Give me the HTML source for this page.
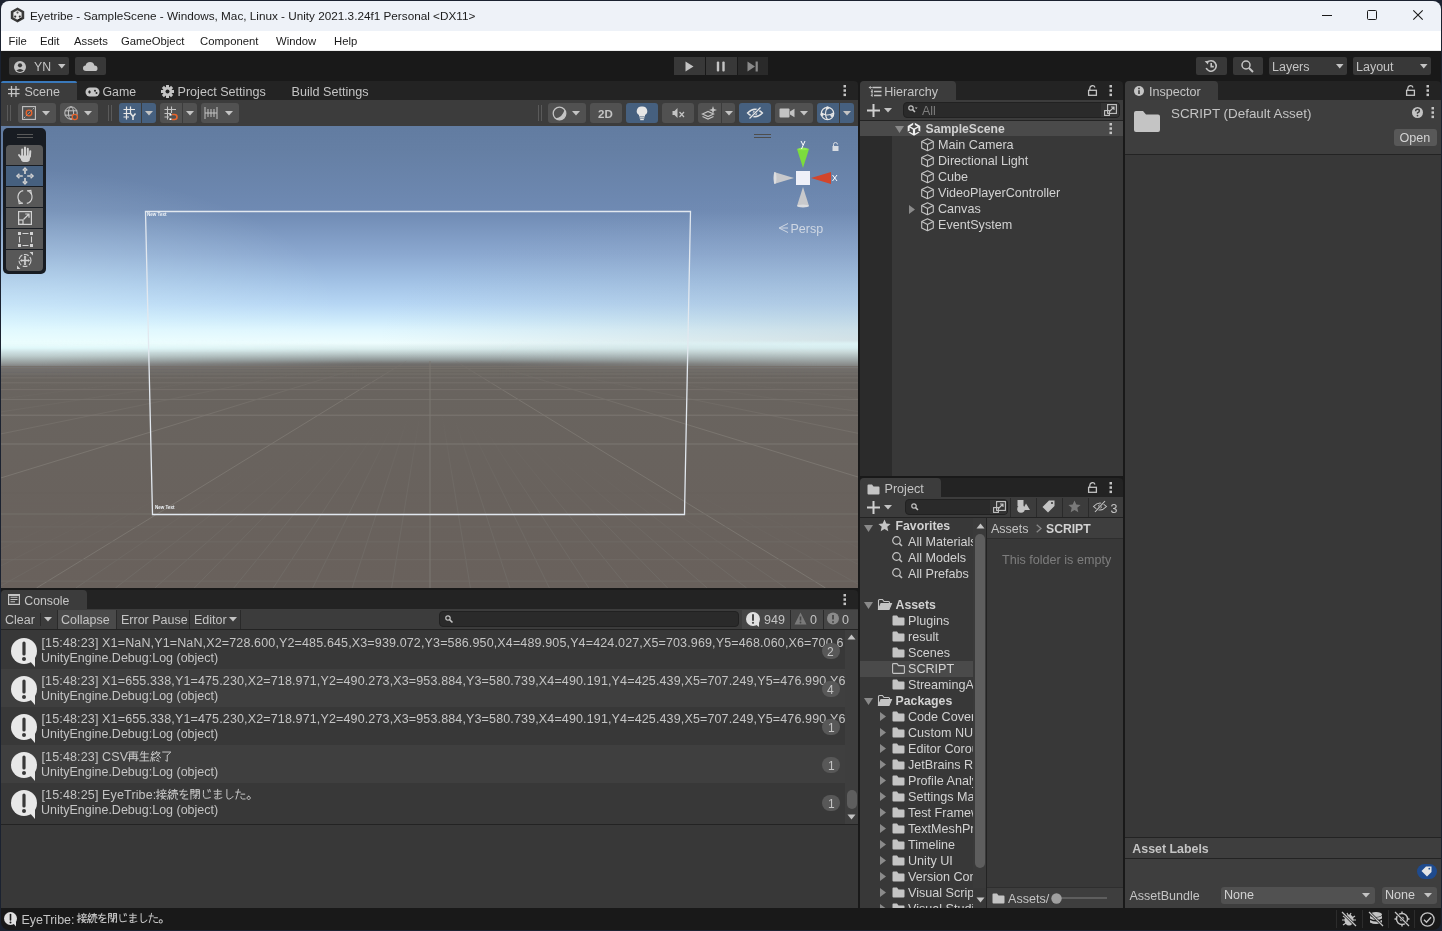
<!DOCTYPE html>
<html><head><meta charset="utf-8">
<style>
*{box-sizing:border-box;margin:0;padding:0}
html,body{width:1442px;height:931px;overflow:hidden;background:#1b2230;font-family:"Liberation Sans",sans-serif;font-size:12px;color:#c4c4c4}
.a{position:absolute}
#win{position:absolute;left:0;top:0;width:1442px;height:931px;clip-path:inset(1px 1px 1px 1px round 8px);background:#191919;overflow:hidden;will-change:transform}
.t{position:absolute;white-space:nowrap;line-height:1;text-shadow:0 0 0 transparent}
svg{position:absolute;overflow:visible}
</style></head><body>
<div id="win">

<div class="a" style="left:0px;top:0px;width:1442px;height:31px;background:#eef2f8;"></div>
<svg style="left:10px;top:7px;" width="15" height="16" viewBox="0 0 15 16"><path d="M7.5 0.5 L14.2 4.3 V11.7 L7.5 15.5 L0.8 11.7 V4.3 Z" fill="#3a3a3a"/><path d="M7.5 3.2 L11.6 5.5 V10.4 L7.5 12.8 L3.4 10.4 V5.5 Z" fill="#e8e8e8"/><circle cx="7.5" cy="5.6" r="1.1" fill="#555"/><circle cx="5.2" cy="9.6" r="1.1" fill="#333"/><circle cx="9.8" cy="9.6" r="1.1" fill="#333"/><path d="M7.5 12.8 L11.6 10.4 V11.5 L7.5 14 Z" fill="#111"/></svg>
<div class="t" style="left:30px;top:10.00px;font-size:11.74px;color:#1a1a1a;font-weight:400;letter-spacing:0px;">Eyetribe - SampleScene - Windows, Mac, Linux - Unity 2021.3.24f1 Personal &lt;DX11&gt;</div>
<div class="a" style="left:1322px;top:15px;width:10px;height:1px;background:#1a1a1a;"></div>
<div class="a" style="left:1367px;top:10px;width:10px;height:10px;border:1px solid #1a1a1a;border-radius:1.5px"></div>
<svg style="left:1413px;top:10px;" width="10" height="10" viewBox="0 0 10 10"><path d="M0.3 0.3 L9.7 9.7 M9.7 0.3 L0.3 9.7" stroke="#1a1a1a" stroke-width="1.1"/></svg>
<div class="a" style="left:0px;top:31px;width:1442px;height:19px;background:#ffffff;"></div>
<div class="a" style="left:0px;top:50px;width:1442px;height:1px;background:#ececec;"></div>
<div class="t" style="left:8.5px;top:36.00px;font-size:11.3px;color:#1a1a1a;font-weight:400;letter-spacing:0px;">File</div>
<div class="t" style="left:40px;top:36.00px;font-size:11.3px;color:#1a1a1a;font-weight:400;letter-spacing:0px;">Edit</div>
<div class="t" style="left:74px;top:36.00px;font-size:11.3px;color:#1a1a1a;font-weight:400;letter-spacing:0px;">Assets</div>
<div class="t" style="left:121px;top:36.00px;font-size:11.3px;color:#1a1a1a;font-weight:400;letter-spacing:0px;">GameObject</div>
<div class="t" style="left:200px;top:36.00px;font-size:11.3px;color:#1a1a1a;font-weight:400;letter-spacing:0px;">Component</div>
<div class="t" style="left:276px;top:36.00px;font-size:11.3px;color:#1a1a1a;font-weight:400;letter-spacing:0px;">Window</div>
<div class="t" style="left:334px;top:36.00px;font-size:11.3px;color:#1a1a1a;font-weight:400;letter-spacing:0px;">Help</div>
<div class="a" style="left:0px;top:51px;width:1442px;height:30px;background:#191919;"></div>
<div class="a" style="left:9px;top:57px;width:60px;height:18px;background:#383838;border-radius:2px"></div>
<svg style="left:14px;top:61px;" width="12" height="12" viewBox="0 0 12 12"><circle cx="6" cy="6" r="6" fill="#c4c4c4"/><circle cx="6" cy="4.3" r="2.1" fill="#383838"/><path d="M2.3 9.6 Q6 6.6 9.7 9.6 Q6 12.2 2.3 9.6Z" fill="#383838"/></svg>
<div class="t" style="left:34px;top:61.00px;font-size:12.3px;color:#c4c4c4;font-weight:400;letter-spacing:0px;">YN</div>
<svg style="left:58px;top:64px;" width="8" height="5" viewBox="0 0 8 5"><path d="M0 0 H7.5 L3.75 4.5Z" fill="#c4c4c4"/></svg>
<div class="a" style="left:75px;top:57px;width:31px;height:18px;background:#383838;border-radius:2px"></div>
<svg style="left:83px;top:61px;" width="15" height="10" viewBox="0 0 15 10"><path d="M3 10 Q0 10 0 7.3 Q0 4.8 2.6 4.6 Q3.2 1 7 1 Q10.6 1 11.4 4.4 Q14.5 4.6 14.5 7.4 Q14.5 10 11.8 10Z" fill="#c4c4c4"/></svg>
<div class="a" style="left:674px;top:57px;width:31px;height:18px;background:#383838;"></div>
<div class="a" style="left:706px;top:57px;width:31px;height:18px;background:#383838;"></div>
<div class="a" style="left:738px;top:57px;width:30px;height:18px;background:#2a2a2a;"></div>
<svg style="left:685px;top:61px;" width="9" height="11" viewBox="0 0 9 11"><path d="M0.5 0.5 L8.5 5.5 L0.5 10.5Z" fill="#c4c4c4"/></svg>
<svg style="left:716px;top:61px;" width="10" height="11" viewBox="0 0 10 11"><rect x="0.8" y="0.5" width="2.4" height="10" rx="1" fill="#c4c4c4"/><rect x="6.3" y="0.5" width="2.4" height="10" rx="1" fill="#c4c4c4"/></svg>
<svg style="left:747px;top:61px;" width="12" height="11" viewBox="0 0 12 11"><path d="M0.5 0.5 L8 5.5 L0.5 10.5Z" fill="#8a8a8a"/><rect x="8.6" y="0.5" width="2.2" height="10" fill="#8a8a8a"/></svg>
<div class="a" style="left:1196px;top:57px;width:31px;height:18px;background:#383838;border-radius:2px"></div>
<svg style="left:1204px;top:59px;" width="14" height="14" viewBox="0 0 14 14"><path d="M3.2 3.4 A5.2 5.2 0 1 1 2.2 9" stroke="#c4c4c4" stroke-width="1.6" fill="none"/><path d="M0.6 2.2 L4.4 1.8 L4 5.6Z" fill="#c4c4c4"/><path d="M7.2 4 V7.6 H9.8" stroke="#c4c4c4" stroke-width="1.6" fill="none"/></svg>
<div class="a" style="left:1233px;top:57px;width:30px;height:18px;background:#383838;border-radius:2px"></div>
<svg style="left:1241px;top:60px;" width="13" height="13" viewBox="0 0 13 13"><circle cx="5" cy="5" r="4" stroke="#c4c4c4" stroke-width="1.5" fill="none"/><path d="M8 8 L12 12" stroke="#c4c4c4" stroke-width="2"/></svg>
<div class="a" style="left:1269px;top:57px;width:78px;height:18px;background:#383838;border-radius:2px"></div>
<div class="t" style="left:1272px;top:61.00px;font-size:12.5px;color:#c4c4c4;font-weight:400;letter-spacing:0px;">Layers</div>
<svg style="left:1336px;top:64px;" width="8" height="5" viewBox="0 0 8 5"><path d="M0 0 H7.5 L3.75 4.5Z" fill="#c4c4c4"/></svg>
<div class="a" style="left:1353px;top:57px;width:78px;height:18px;background:#383838;border-radius:2px"></div>
<div class="t" style="left:1356px;top:61.00px;font-size:12.5px;color:#c4c4c4;font-weight:400;letter-spacing:0px;">Layout</div>
<svg style="left:1420px;top:64px;" width="8" height="5" viewBox="0 0 8 5"><path d="M0 0 H7.5 L3.75 4.5Z" fill="#c4c4c4"/></svg>
<div class="a" style="left:1px;top:81px;width:857px;height:19px;background:#232323;border-radius:4px 4px 0 0"></div>
<div class="a" style="left:1px;top:81px;width:76px;height:19px;background:#3c3c3c;border-radius:4px 4px 0 0"></div>
<div class="a" style="left:1px;top:81px;width:76px;height:2px;background:#3a79bb;border-radius:4px 4px 0 0"></div>
<svg style="left:8px;top:86px;" width="12" height="11" viewBox="0 0 12 11"><path d="M3.5 0 V11 M8 0 V11 M0 3.3 H11.5 M0 7.6 H11.5" stroke="#c4c4c4" stroke-width="1.3"/></svg>
<div class="t" style="left:24.5px;top:86.00px;font-size:12.5px;color:#c4c4c4;font-weight:400;letter-spacing:0px;">Scene</div>
<svg style="left:85px;top:87px;" width="15" height="10" viewBox="0 0 15 10"><rect x="0.5" y="0.5" width="14" height="9" rx="4.5" fill="#c4c4c4"/><path d="M3 5 H6 M4.5 3.5 V6.5" stroke="#232323" stroke-width="1.2"/><circle cx="10" cy="3.8" r="1" fill="#232323"/><circle cx="11.5" cy="6" r="1" fill="#232323"/></svg>
<div class="t" style="left:102.5px;top:86.00px;font-size:12.3px;color:#c4c4c4;font-weight:400;letter-spacing:0px;">Game</div>
<svg style="left:161px;top:85px;" width="13" height="13" viewBox="0 0 13 13"><g transform="translate(6.5 6.5)"><circle r="4.6" fill="#c4c4c4"/><rect x="-1.5" y="-6.5" width="3" height="3.5" fill="#c4c4c4" transform="rotate(0)"/><rect x="-1.5" y="-6.5" width="3" height="3.5" fill="#c4c4c4" transform="rotate(45)"/><rect x="-1.5" y="-6.5" width="3" height="3.5" fill="#c4c4c4" transform="rotate(90)"/><rect x="-1.5" y="-6.5" width="3" height="3.5" fill="#c4c4c4" transform="rotate(135)"/><rect x="-1.5" y="-6.5" width="3" height="3.5" fill="#c4c4c4" transform="rotate(180)"/><rect x="-1.5" y="-6.5" width="3" height="3.5" fill="#c4c4c4" transform="rotate(225)"/><rect x="-1.5" y="-6.5" width="3" height="3.5" fill="#c4c4c4" transform="rotate(270)"/><rect x="-1.5" y="-6.5" width="3" height="3.5" fill="#c4c4c4" transform="rotate(315)"/><circle r="2" fill="#232323"/></g></svg>
<div class="t" style="left:177.5px;top:86.00px;font-size:12.6px;color:#c4c4c4;font-weight:400;letter-spacing:0px;">Project Settings</div>
<div class="t" style="left:291.5px;top:86.00px;font-size:12.6px;color:#c4c4c4;font-weight:400;letter-spacing:0px;">Build Settings</div>
<svg style="left:843px;top:85px;" width="4" height="12" viewBox="0 0 4 12"><rect x="0.5" y="0" width="2.5" height="2.5" fill="#c4c4c4"/><rect x="0.5" y="4.3" width="2.5" height="2.5" fill="#c4c4c4"/><rect x="0.5" y="8.6" width="2.5" height="2.5" fill="#c4c4c4"/></svg>
<div class="a" style="left:1px;top:100px;width:857px;height:26px;background:#3c3c3c;"></div>
<div class="a" style="left:7px;top:105px;width:1px;height:16px;background:#5a5a5a;"></div>
<div class="a" style="left:10px;top:105px;width:1px;height:16px;background:#5a5a5a;"></div>
<div class="a" style="left:108px;top:105px;width:1px;height:16px;background:#5a5a5a;"></div>
<div class="a" style="left:111px;top:105px;width:1px;height:16px;background:#5a5a5a;"></div>
<div class="a" style="left:18px;top:103px;width:38px;height:20px;background:#515151;border-radius:3px"></div>
<svg style="left:22px;top:106px;" width="14" height="14" viewBox="0 0 14 14"><rect x="0.6" y="0.6" width="12.8" height="12.8" fill="none" stroke="#c4c4c4" stroke-width="1.1"/><path d="M2 12 L12 2" stroke="#c4c4c4" stroke-width="0.9" stroke-dasharray="1.5 1"/><circle cx="7" cy="7" r="2.8" fill="none" stroke="#e8642c" stroke-width="1.3"/></svg>
<svg style="left:42px;top:111px;" width="8" height="5" viewBox="0 0 8 5"><path d="M0 0 H8 L4 4.6Z" fill="#c4c4c4"/></svg>
<div class="a" style="left:60px;top:103px;width:38px;height:20px;background:#515151;border-radius:3px"></div>
<svg style="left:64px;top:106px;" width="14" height="14" viewBox="0 0 14 14"><circle cx="7" cy="7" r="6.2" fill="none" stroke="#c4c4c4" stroke-width="1"/><ellipse cx="7" cy="7" rx="2.6" ry="6.2" fill="none" stroke="#c4c4c4" stroke-width="1"/><path d="M0.8 4.8 H13.2 M0.8 9.2 H13.2" stroke="#c4c4c4" stroke-width="1"/><circle cx="10.8" cy="11" r="2.6" fill="#515151" stroke="#e8642c" stroke-width="1.3"/></svg>
<svg style="left:84px;top:111px;" width="8" height="5" viewBox="0 0 8 5"><path d="M0 0 H8 L4 4.6Z" fill="#c4c4c4"/></svg>
<div class="a" style="left:119px;top:103px;width:22px;height:20px;background:#46607f;border-radius:3px 0 0 3px"></div>
<div class="a" style="left:142px;top:103px;width:14px;height:20px;background:#46607f;border-radius:0 3px 3px 0"></div>
<svg style="left:123px;top:106px;" width="14" height="14" viewBox="0 0 14 14"><path d="M3.5 0.5 V13.5 M7.5 0.5 V8 M0.5 3.5 H12 M0.5 7.5 H7 M0.5 11 H6" stroke="#e6e6e6" stroke-width="1.2"/><path d="M7.5 7.5 L10 10.5 L12.5 7.5 M10 10.5 V14" stroke="#e6e6e6" stroke-width="1.5" fill="none"/></svg>
<svg style="left:145px;top:111px;" width="8" height="5" viewBox="0 0 8 5"><path d="M0 0 H8 L4 4.6Z" fill="#c4c4c4"/></svg>
<div class="a" style="left:160px;top:103px;width:22px;height:20px;background:#515151;border-radius:3px 0 0 3px"></div>
<div class="a" style="left:183px;top:103px;width:14px;height:20px;background:#515151;border-radius:0 3px 3px 0"></div>
<svg style="left:164px;top:106px;" width="14" height="14" viewBox="0 0 14 14"><path d="M3.5 0.5 V13.5 M7.5 0.5 V7 M0.5 3.5 H12 M0.5 7.5 H7 M0.5 11 H5" stroke="#c4c4c4" stroke-width="1.1"/><path d="M8 8.5 H10.5 A2.5 2.5 0 0 1 10.5 13.5 H8" stroke="#e8642c" stroke-width="1.6" fill="none"/><rect x="5.5" y="8" width="2" height="1.6" fill="#fff"/><rect x="5.5" y="12.4" width="2" height="1.6" fill="#fff"/></svg>
<svg style="left:186px;top:111px;" width="8" height="5" viewBox="0 0 8 5"><path d="M0 0 H8 L4 4.6Z" fill="#c4c4c4"/></svg>
<div class="a" style="left:201px;top:103px;width:38px;height:20px;background:#515151;border-radius:3px"></div>
<svg style="left:204px;top:106px;" width="14" height="14" viewBox="0 0 14 14"><path d="M1 1 V13 M13 1 V13 M1 7 H13 M4 3 V11 M7 3 V11 M10 3 V11" stroke="#c4c4c4" stroke-width="1"/></svg>
<svg style="left:225px;top:111px;" width="8" height="5" viewBox="0 0 8 5"><path d="M0 0 H8 L4 4.6Z" fill="#c4c4c4"/></svg>
<div class="a" style="left:538px;top:105px;width:1px;height:16px;background:#5a5a5a;"></div>
<div class="a" style="left:541px;top:105px;width:1px;height:16px;background:#5a5a5a;"></div>
<div class="a" style="left:548px;top:103px;width:38px;height:20px;background:#515151;border-radius:3px"></div>
<svg style="left:552px;top:106px;" width="15" height="15" viewBox="0 0 15 15"><circle cx="7.5" cy="7.5" r="6.3" fill="none" stroke="#c4c4c4" stroke-width="1.3"/><path d="M12.6 3.8 A6.3 6.3 0 0 1 3.2 12.1 Q9.8 12.6 12.6 3.8Z" fill="#c4c4c4"/></svg>
<svg style="left:572px;top:111px;" width="8" height="5" viewBox="0 0 8 5"><path d="M0 0 H8 L4 4.6Z" fill="#c4c4c4"/></svg>
<div class="a" style="left:590px;top:103px;width:32px;height:20px;background:#515151;border-radius:3px"></div>
<div class="t" style="left:598px;top:109.00px;font-size:11.5px;color:#c4c4c4;font-weight:700;letter-spacing:0px;">2D</div>
<div class="a" style="left:626px;top:103px;width:32px;height:20px;background:#46607f;border-radius:3px"></div>
<svg style="left:636px;top:106px;" width="12" height="15" viewBox="0 0 12 15"><path d="M6 0.5 A4.6 4.6 0 0 1 9 9 V10.5 H3 V9 A4.6 4.6 0 0 1 6 0.5Z" fill="#e6e6e6"/><rect x="3.6" y="11.2" width="4.8" height="1.3" fill="#e6e6e6"/><rect x="4.2" y="13" width="3.6" height="1.2" fill="#e6e6e6"/></svg>
<div class="a" style="left:662px;top:103px;width:32px;height:20px;background:#515151;border-radius:3px"></div>
<svg style="left:672px;top:107px;" width="14" height="12" viewBox="0 0 14 12"><path d="M0.5 4 H2.5 L5.5 1 V11 L2.5 8 H0.5Z" fill="#c4c4c4"/><path d="M7.5 5 L12 10 M12 5 L7.5 10" stroke="#c4c4c4" stroke-width="1.2"/></svg>
<div class="a" style="left:698px;top:103px;width:23px;height:20px;background:#515151;border-radius:3px 0 0 3px"></div>
<div class="a" style="left:722px;top:103px;width:13px;height:20px;background:#515151;border-radius:0 3px 3px 0"></div>
<svg style="left:702px;top:106px;" width="15" height="14" viewBox="0 0 15 14"><path d="M0.5 8 L6 5.5 L11.5 8 L6 10.5Z M0.5 10.5 L6 13 L11.5 10.5" fill="none" stroke="#c4c4c4" stroke-width="1.2"/><path d="M11 0 L12 3 L15 4 L12 5 L11 8 L10 5 L7 4 L10 3Z" fill="#c4c4c4"/></svg>
<svg style="left:725px;top:111px;" width="8" height="5" viewBox="0 0 8 5"><path d="M0 0 H8 L4 4.6Z" fill="#c4c4c4"/></svg>
<div class="a" style="left:739px;top:103px;width:32px;height:20px;background:#46607f;border-radius:3px"></div>
<svg style="left:747px;top:107px;" width="16" height="12" viewBox="0 0 16 12"><path d="M0.5 6 Q8 -1.5 15.5 6 Q8 13.5 0.5 6Z" fill="none" stroke="#e6e6e6" stroke-width="1.3"/><circle cx="8" cy="6" r="2.3" fill="#e6e6e6"/><path d="M2 12 L14 0" stroke="#46607f" stroke-width="2.6"/><path d="M2.5 11.5 L13.5 0.5" stroke="#e6e6e6" stroke-width="1.2"/></svg>
<div class="a" style="left:775px;top:103px;width:38px;height:20px;background:#515151;border-radius:3px"></div>
<svg style="left:779px;top:108px;" width="16" height="10" viewBox="0 0 16 10"><rect x="0.5" y="0.5" width="10" height="9" rx="1" fill="#c4c4c4"/><path d="M11 3.5 L15.5 0.8 V9.2 L11 6.5Z" fill="#c4c4c4"/></svg>
<svg style="left:800px;top:111px;" width="8" height="5" viewBox="0 0 8 5"><path d="M0 0 H8 L4 4.6Z" fill="#c4c4c4"/></svg>
<div class="a" style="left:817px;top:103px;width:22px;height:20px;background:#46607f;border-radius:3px 0 0 3px"></div>
<div class="a" style="left:840px;top:103px;width:14px;height:20px;background:#46607f;border-radius:0 3px 3px 0"></div>
<svg style="left:820px;top:106px;" width="15" height="15" viewBox="0 0 15 15"><circle cx="7.5" cy="7.5" r="6.2" fill="none" stroke="#e6e6e6" stroke-width="1.3"/><path d="M1.5 7 Q7.5 11 13.5 7 M7.5 1.3 Q3.5 7.5 7.5 13.7" fill="none" stroke="#e6e6e6" stroke-width="1.2"/><circle cx="7.5" cy="1.8" r="1.6" fill="#e6e6e6"/><circle cx="2" cy="8.5" r="1.6" fill="#e6e6e6"/><circle cx="12" cy="9.5" r="1.6" fill="#e6e6e6"/></svg>
<svg style="left:843px;top:111px;" width="8" height="5" viewBox="0 0 8 5"><path d="M0 0 H8 L4 4.6Z" fill="#c4c4c4"/></svg>
<div class="a" style="left:1px;top:126px;width:857px;height:462px;overflow:hidden;background:linear-gradient(180deg,#627ca1 0px,#657fa4 24px,#6f8ab3 85px,#8ba8d0 128px,#9fbfe3 153px,#b6d6f4 178px,#cdeafb 194px,#dff6fe 204px,#eefdfe 217px,#d9ecec 223px,#b9c8c8 228px,#8f9797 234px,#706e6c 238px,#6a6661 244px,#69645f 262px,#69615c 462px)">
<div class="a" style="left:0;top:0;width:857px;height:226px;background:radial-gradient(ellipse 340px 150px at 0px 192px,rgba(230,255,255,0.36),rgba(230,255,255,0) 100%)"></div>
<div class="a" style="left:0;top:0;width:857px;height:232px;background:radial-gradient(ellipse 480px 150px at 857px 215px,rgba(150,160,170,0.28),rgba(150,160,170,0) 100%)"></div>
<div class="a" style="left:0;top:214px;width:380px;height:38px;background:linear-gradient(180deg,rgba(240,253,254,0) 0px,#e8fbfc 5px,#e0f8fa 8px,#cde0e2 12px,#bccccc 16px,#a5b0b0 20px,#909494 24px,#757373 28px,#6d6b6b 31px,#69645f 38px);-webkit-mask-image:linear-gradient(90deg,#000 0px,#000 40px,transparent 360px);mask-image:linear-gradient(90deg,#000 0px,#000 40px,transparent 360px)"></div>
<div class="a" style="left:477px;top:214px;width:380px;height:38px;background:linear-gradient(180deg,rgba(220,242,245,0) 0px,#dcf2f5 4px,#d6ecee 8px,#c8d8d8 12px,#a8b3b3 18px,#8d908f 24px,#6e6b69 30px,#69645f 38px);-webkit-mask-image:linear-gradient(270deg,#000 0px,#000 40px,transparent 360px);mask-image:linear-gradient(270deg,#000 0px,#000 40px,transparent 360px)"></div>
<svg style="left:0;top:0" width="857" height="462"><defs><linearGradient id="fadeF" gradientUnits="userSpaceOnUse" x1="0" y1="269" x2="0" y2="344"><stop offset="0" stop-color="#6f6a65" stop-opacity="0"/><stop offset="1" stop-color="#6f6a65" stop-opacity="1"/></linearGradient><linearGradient id="fadeM" gradientUnits="userSpaceOnUse" x1="0" y1="236" x2="0" y2="294"><stop offset="0" stop-color="#7a756f" stop-opacity="0.15"/><stop offset="1" stop-color="#7a756f" stop-opacity="1"/></linearGradient></defs><linearGradient id="g1" gradientUnits="userSpaceOnUse" x1="29.1" y1="255.1" x2="-0.0" y2="257.7"><stop offset="0" stop-color="#7a756f" stop-opacity="0.00"/><stop offset="1" stop-color="#7a756f" stop-opacity="0.01"/></linearGradient><line x1="29.1" y1="255.1" x2="-0.0" y2="257.7" stroke="url(#g1)" stroke-width="1"/><linearGradient id="g2" gradientUnits="userSpaceOnUse" x1="135.0" y1="250.2" x2="0.0" y2="264.0"><stop offset="0" stop-color="#7a756f" stop-opacity="0.00"/><stop offset="1" stop-color="#7a756f" stop-opacity="0.07"/></linearGradient><line x1="135.0" y1="250.2" x2="0.0" y2="264.0" stroke="url(#g2)" stroke-width="1"/><linearGradient id="g3" gradientUnits="userSpaceOnUse" x1="224.7" y1="245.2" x2="0.0" y2="272.8"><stop offset="0" stop-color="#7a756f" stop-opacity="0.00"/><stop offset="1" stop-color="#7a756f" stop-opacity="0.16"/></linearGradient><line x1="224.7" y1="245.2" x2="0.0" y2="272.8" stroke="url(#g3)" stroke-width="1"/><linearGradient id="g4" gradientUnits="userSpaceOnUse" x1="298.1" y1="240.2" x2="-0.0" y2="285.9"><stop offset="0" stop-color="#7a756f" stop-opacity="0.00"/><stop offset="1" stop-color="#7a756f" stop-opacity="0.32"/></linearGradient><line x1="298.1" y1="240.2" x2="-0.0" y2="285.9" stroke="url(#g4)" stroke-width="1"/><linearGradient id="g5" gradientUnits="userSpaceOnUse" x1="355.1" y1="235.3" x2="0.0" y2="307.9"><stop offset="0" stop-color="#7a756f" stop-opacity="0.00"/><stop offset="1" stop-color="#7a756f" stop-opacity="0.68"/></linearGradient><line x1="355.1" y1="235.3" x2="0.0" y2="307.9" stroke="url(#g5)" stroke-width="1"/><linearGradient id="g6" gradientUnits="userSpaceOnUse" x1="381.1" y1="235.0" x2="157.2" y2="303.7"><stop offset="0" stop-color="#7a756f" stop-opacity="0.06"/><stop offset="1" stop-color="#7a756f" stop-opacity="1.00"/></linearGradient><line x1="381.1" y1="235.0" x2="-0.0" y2="351.9" stroke="url(#g6)" stroke-width="1"/><linearGradient id="g7" gradientUnits="userSpaceOnUse" x1="46.3" y1="388.1" x2="0.0" y2="408.4"><stop offset="0" stop-color="#6f6a65" stop-opacity="0.00"/><stop offset="1" stop-color="#6f6a65" stop-opacity="0.12"/></linearGradient><line x1="46.3" y1="388.1" x2="0.0" y2="408.4" stroke="url(#g7)" stroke-width="1"/><linearGradient id="g8" gradientUnits="userSpaceOnUse" x1="94.9" y1="378.1" x2="0.0" y2="422.9"><stop offset="0" stop-color="#6f6a65" stop-opacity="0.00"/><stop offset="1" stop-color="#6f6a65" stop-opacity="0.28"/></linearGradient><line x1="94.9" y1="378.1" x2="0.0" y2="422.9" stroke="url(#g8)" stroke-width="1"/><linearGradient id="g9" gradientUnits="userSpaceOnUse" x1="140.0" y1="368.2" x2="-0.0" y2="439.8"><stop offset="0" stop-color="#6f6a65" stop-opacity="0.00"/><stop offset="1" stop-color="#6f6a65" stop-opacity="0.48"/></linearGradient><line x1="140.0" y1="368.2" x2="-0.0" y2="439.8" stroke="url(#g9)" stroke-width="1"/><linearGradient id="g10" gradientUnits="userSpaceOnUse" x1="181.6" y1="358.5" x2="0.0" y2="459.8"><stop offset="0" stop-color="#6f6a65" stop-opacity="0.00"/><stop offset="1" stop-color="#6f6a65" stop-opacity="0.73"/></linearGradient><line x1="181.6" y1="358.5" x2="0.0" y2="459.8" stroke="url(#g10)" stroke-width="1"/><linearGradient id="g11" gradientUnits="userSpaceOnUse" x1="405.5" y1="235.0" x2="353.5" y2="266.9"><stop offset="0" stop-color="#7a756f" stop-opacity="0.22"/><stop offset="1" stop-color="#7a756f" stop-opacity="1.00"/></linearGradient><line x1="405.5" y1="235.0" x2="35.5" y2="462.0" stroke="url(#g11)" stroke-width="1"/><linearGradient id="g12" gradientUnits="userSpaceOnUse" x1="254.2" y1="339.8" x2="78.4" y2="459.6"><stop offset="0" stop-color="#6f6a65" stop-opacity="0.00"/><stop offset="1" stop-color="#6f6a65" stop-opacity="1.00"/></linearGradient><line x1="254.2" y1="339.8" x2="74.9" y2="462.0" stroke="url(#g12)" stroke-width="1"/><linearGradient id="g13" gradientUnits="userSpaceOnUse" x1="285.4" y1="330.9" x2="140.8" y2="441.8"><stop offset="0" stop-color="#6f6a65" stop-opacity="0.00"/><stop offset="1" stop-color="#6f6a65" stop-opacity="1.00"/></linearGradient><line x1="285.4" y1="330.9" x2="114.4" y2="462.0" stroke="url(#g13)" stroke-width="1"/><linearGradient id="g14" gradientUnits="userSpaceOnUse" x1="313.2" y1="322.4" x2="196.3" y2="424.8"><stop offset="0" stop-color="#6f6a65" stop-opacity="0.00"/><stop offset="1" stop-color="#6f6a65" stop-opacity="1.00"/></linearGradient><line x1="313.2" y1="322.4" x2="153.8" y2="462.0" stroke="url(#g14)" stroke-width="1"/><linearGradient id="g15" gradientUnits="userSpaceOnUse" x1="337.7" y1="314.4" x2="245.4" y2="408.8"><stop offset="0" stop-color="#6f6a65" stop-opacity="0.00"/><stop offset="1" stop-color="#6f6a65" stop-opacity="1.00"/></linearGradient><line x1="337.7" y1="314.4" x2="193.3" y2="462.0" stroke="url(#g15)" stroke-width="1"/><linearGradient id="g16" gradientUnits="userSpaceOnUse" x1="359.0" y1="307.1" x2="288.1" y2="394.1"><stop offset="0" stop-color="#6f6a65" stop-opacity="0.00"/><stop offset="1" stop-color="#6f6a65" stop-opacity="1.00"/></linearGradient><line x1="359.0" y1="307.1" x2="232.8" y2="462.0" stroke="url(#g16)" stroke-width="1"/><linearGradient id="g17" gradientUnits="userSpaceOnUse" x1="377.5" y1="300.6" x2="324.9" y2="381.1"><stop offset="0" stop-color="#6f6a65" stop-opacity="0.00"/><stop offset="1" stop-color="#6f6a65" stop-opacity="1.00"/></linearGradient><line x1="377.5" y1="300.6" x2="272.2" y2="462.0" stroke="url(#g17)" stroke-width="1"/><linearGradient id="g18" gradientUnits="userSpaceOnUse" x1="393.3" y1="295.1" x2="356.5" y2="370.2"><stop offset="0" stop-color="#6f6a65" stop-opacity="0.00"/><stop offset="1" stop-color="#6f6a65" stop-opacity="1.00"/></linearGradient><line x1="393.3" y1="295.1" x2="311.6" y2="462.0" stroke="url(#g18)" stroke-width="1"/><linearGradient id="g19" gradientUnits="userSpaceOnUse" x1="406.9" y1="291.0" x2="383.7" y2="361.9"><stop offset="0" stop-color="#6f6a65" stop-opacity="0.00"/><stop offset="1" stop-color="#6f6a65" stop-opacity="1.00"/></linearGradient><line x1="406.9" y1="291.0" x2="351.1" y2="462.0" stroke="url(#g19)" stroke-width="1"/><linearGradient id="g20" gradientUnits="userSpaceOnUse" x1="418.9" y1="288.4" x2="407.7" y2="356.7"><stop offset="0" stop-color="#6f6a65" stop-opacity="0.00"/><stop offset="1" stop-color="#6f6a65" stop-opacity="1.00"/></linearGradient><line x1="418.9" y1="288.4" x2="390.6" y2="462.0" stroke="url(#g20)" stroke-width="1"/><linearGradient id="g21" gradientUnits="userSpaceOnUse" x1="441.1" y1="288.4" x2="452.3" y2="356.7"><stop offset="0" stop-color="#6f6a65" stop-opacity="0.00"/><stop offset="1" stop-color="#6f6a65" stop-opacity="1.00"/></linearGradient><line x1="441.1" y1="288.4" x2="469.4" y2="462.0" stroke="url(#g21)" stroke-width="1"/><linearGradient id="g22" gradientUnits="userSpaceOnUse" x1="453.1" y1="291.0" x2="476.3" y2="361.9"><stop offset="0" stop-color="#6f6a65" stop-opacity="0.00"/><stop offset="1" stop-color="#6f6a65" stop-opacity="1.00"/></linearGradient><line x1="453.1" y1="291.0" x2="508.9" y2="462.0" stroke="url(#g22)" stroke-width="1"/><linearGradient id="g23" gradientUnits="userSpaceOnUse" x1="466.7" y1="295.1" x2="503.5" y2="370.2"><stop offset="0" stop-color="#6f6a65" stop-opacity="0.00"/><stop offset="1" stop-color="#6f6a65" stop-opacity="1.00"/></linearGradient><line x1="466.7" y1="295.1" x2="548.4" y2="462.0" stroke="url(#g23)" stroke-width="1"/><linearGradient id="g24" gradientUnits="userSpaceOnUse" x1="482.5" y1="300.6" x2="535.1" y2="381.1"><stop offset="0" stop-color="#6f6a65" stop-opacity="0.00"/><stop offset="1" stop-color="#6f6a65" stop-opacity="1.00"/></linearGradient><line x1="482.5" y1="300.6" x2="587.8" y2="462.0" stroke="url(#g24)" stroke-width="1"/><linearGradient id="g25" gradientUnits="userSpaceOnUse" x1="501.0" y1="307.1" x2="571.9" y2="394.1"><stop offset="0" stop-color="#6f6a65" stop-opacity="0.00"/><stop offset="1" stop-color="#6f6a65" stop-opacity="1.00"/></linearGradient><line x1="501.0" y1="307.1" x2="627.2" y2="462.0" stroke="url(#g25)" stroke-width="1"/><linearGradient id="g26" gradientUnits="userSpaceOnUse" x1="522.3" y1="314.4" x2="614.6" y2="408.8"><stop offset="0" stop-color="#6f6a65" stop-opacity="0.00"/><stop offset="1" stop-color="#6f6a65" stop-opacity="1.00"/></linearGradient><line x1="522.3" y1="314.4" x2="666.7" y2="462.0" stroke="url(#g26)" stroke-width="1"/><linearGradient id="g27" gradientUnits="userSpaceOnUse" x1="546.8" y1="322.4" x2="663.7" y2="424.8"><stop offset="0" stop-color="#6f6a65" stop-opacity="0.00"/><stop offset="1" stop-color="#6f6a65" stop-opacity="1.00"/></linearGradient><line x1="546.8" y1="322.4" x2="706.2" y2="462.0" stroke="url(#g27)" stroke-width="1"/><linearGradient id="g28" gradientUnits="userSpaceOnUse" x1="574.6" y1="330.9" x2="719.2" y2="441.8"><stop offset="0" stop-color="#6f6a65" stop-opacity="0.00"/><stop offset="1" stop-color="#6f6a65" stop-opacity="1.00"/></linearGradient><line x1="574.6" y1="330.9" x2="745.6" y2="462.0" stroke="url(#g28)" stroke-width="1"/><linearGradient id="g29" gradientUnits="userSpaceOnUse" x1="605.8" y1="339.8" x2="781.6" y2="459.6"><stop offset="0" stop-color="#6f6a65" stop-opacity="0.00"/><stop offset="1" stop-color="#6f6a65" stop-opacity="1.00"/></linearGradient><line x1="605.8" y1="339.8" x2="785.0" y2="462.0" stroke="url(#g29)" stroke-width="1"/><linearGradient id="g30" gradientUnits="userSpaceOnUse" x1="454.5" y1="235.0" x2="506.5" y2="266.9"><stop offset="0" stop-color="#7a756f" stop-opacity="0.22"/><stop offset="1" stop-color="#7a756f" stop-opacity="1.00"/></linearGradient><line x1="454.5" y1="235.0" x2="824.5" y2="462.0" stroke="url(#g30)" stroke-width="1"/><linearGradient id="g31" gradientUnits="userSpaceOnUse" x1="678.4" y1="358.5" x2="857.0" y2="458.1"><stop offset="0" stop-color="#6f6a65" stop-opacity="0.00"/><stop offset="1" stop-color="#6f6a65" stop-opacity="0.72"/></linearGradient><line x1="678.4" y1="358.5" x2="857.0" y2="458.1" stroke="url(#g31)" stroke-width="1"/><linearGradient id="g32" gradientUnits="userSpaceOnUse" x1="720.0" y1="368.2" x2="857.0" y2="438.3"><stop offset="0" stop-color="#6f6a65" stop-opacity="0.00"/><stop offset="1" stop-color="#6f6a65" stop-opacity="0.47"/></linearGradient><line x1="720.0" y1="368.2" x2="857.0" y2="438.3" stroke="url(#g32)" stroke-width="1"/><linearGradient id="g33" gradientUnits="userSpaceOnUse" x1="765.1" y1="378.1" x2="857.0" y2="421.5"><stop offset="0" stop-color="#6f6a65" stop-opacity="0.00"/><stop offset="1" stop-color="#6f6a65" stop-opacity="0.27"/></linearGradient><line x1="765.1" y1="378.1" x2="857.0" y2="421.5" stroke="url(#g33)" stroke-width="1"/><linearGradient id="g34" gradientUnits="userSpaceOnUse" x1="813.7" y1="388.1" x2="857.0" y2="407.1"><stop offset="0" stop-color="#6f6a65" stop-opacity="0.00"/><stop offset="1" stop-color="#6f6a65" stop-opacity="0.11"/></linearGradient><line x1="813.7" y1="388.1" x2="857.0" y2="407.1" stroke="url(#g34)" stroke-width="1"/><linearGradient id="g35" gradientUnits="userSpaceOnUse" x1="478.9" y1="235.0" x2="702.8" y2="303.7"><stop offset="0" stop-color="#7a756f" stop-opacity="0.06"/><stop offset="1" stop-color="#7a756f" stop-opacity="1.00"/></linearGradient><line x1="478.9" y1="235.0" x2="857.0" y2="351.0" stroke="url(#g35)" stroke-width="1"/><linearGradient id="g36" gradientUnits="userSpaceOnUse" x1="504.9" y1="235.3" x2="857.0" y2="307.3"><stop offset="0" stop-color="#7a756f" stop-opacity="0.00"/><stop offset="1" stop-color="#7a756f" stop-opacity="0.67"/></linearGradient><line x1="504.9" y1="235.3" x2="857.0" y2="307.3" stroke="url(#g36)" stroke-width="1"/><linearGradient id="g37" gradientUnits="userSpaceOnUse" x1="561.9" y1="240.2" x2="857.0" y2="285.5"><stop offset="0" stop-color="#7a756f" stop-opacity="0.00"/><stop offset="1" stop-color="#7a756f" stop-opacity="0.32"/></linearGradient><line x1="561.9" y1="240.2" x2="857.0" y2="285.5" stroke="url(#g37)" stroke-width="1"/><linearGradient id="g38" gradientUnits="userSpaceOnUse" x1="635.3" y1="245.2" x2="857.0" y2="272.4"><stop offset="0" stop-color="#7a756f" stop-opacity="0.00"/><stop offset="1" stop-color="#7a756f" stop-opacity="0.15"/></linearGradient><line x1="635.3" y1="245.2" x2="857.0" y2="272.4" stroke="url(#g38)" stroke-width="1"/><linearGradient id="g39" gradientUnits="userSpaceOnUse" x1="725.0" y1="250.2" x2="857.0" y2="263.7"><stop offset="0" stop-color="#7a756f" stop-opacity="0.00"/><stop offset="1" stop-color="#7a756f" stop-opacity="0.06"/></linearGradient><line x1="725.0" y1="250.2" x2="857.0" y2="263.7" stroke="url(#g39)" stroke-width="1"/><linearGradient id="g40" gradientUnits="userSpaceOnUse" x1="830.9" y1="255.1" x2="857.0" y2="257.4"><stop offset="0" stop-color="#7a756f" stop-opacity="0.00"/><stop offset="1" stop-color="#7a756f" stop-opacity="0.01"/></linearGradient><line x1="830.9" y1="255.1" x2="857.0" y2="257.4" stroke="url(#g40)" stroke-width="1"/><line x1="0" y1="240.6" x2="857" y2="240.6" stroke="#75706b" stroke-width="1"/><line x1="0" y1="242.6" x2="857" y2="242.6" stroke="#75706b" stroke-width="1"/><line x1="0" y1="245.0" x2="857" y2="245.0" stroke="#75706b" stroke-width="1"/><line x1="0" y1="248.0" x2="857" y2="248.0" stroke="#75706b" stroke-width="1"/><line x1="0" y1="251.8" x2="857" y2="251.8" stroke="#75706b" stroke-width="1"/><line x1="0" y1="256.8" x2="857" y2="256.8" stroke="#75706b" stroke-width="1"/><line x1="0" y1="263.6" x2="857" y2="263.6" stroke="#75706b" stroke-width="1"/><line x1="0" y1="273.5" x2="857" y2="273.5" stroke="#75706b" stroke-width="1"/><line x1="0" y1="289.2" x2="857" y2="289.2" stroke="#7d7873" stroke-width="1"/><line x1="0" y1="318.0" x2="857" y2="318.0" stroke="#7d7873" stroke-width="1"/><line x1="0" y1="367.0" x2="857" y2="367.0" stroke="#6f6a65" stroke-opacity="0.03" stroke-width="1"/><line x1="0" y1="376.8" x2="857" y2="376.8" stroke="#6f6a65" stroke-opacity="0.21" stroke-width="1"/><line x1="0" y1="388.0" x2="857" y2="388.0" stroke="#75706b" stroke-width="1"/><line x1="0" y1="400.9" x2="857" y2="400.9" stroke="#6f6a65" stroke-opacity="0.70" stroke-width="1"/><line x1="0" y1="415.9" x2="857" y2="415.9" stroke="#6f6a65" stroke-opacity="1.00" stroke-width="1"/><line x1="0" y1="433.7" x2="857" y2="433.7" stroke="#6f6a65" stroke-opacity="1.00" stroke-width="1"/><line x1="0" y1="455.1" x2="857" y2="455.1" stroke="#6f6a65" stroke-opacity="1.00" stroke-width="1"/><line x1="429" y1="235" x2="429" y2="462" stroke="#7d7873" stroke-width="1"/></svg>
<svg style="left:0;top:0" width="857" height="462"><path d="M144.5 85.5 L689.5 85.5 L683.5 388.5 L151.5 388.5 Z" fill="none" stroke="#e2e8ef" stroke-width="1.3"/></svg>
<div class="t" style="left:146px;top:87.00px;font-size:4.5px;color:#f0f4f8;font-weight:700;letter-spacing:0px;">New Text</div>
<div class="t" style="left:154px;top:380.00px;font-size:4.5px;color:#f0f4f8;font-weight:700;letter-spacing:0px;">New Text</div>
</div>
<div class="a" style="left:3px;top:128px;width:43px;height:146px;background:#181c22;border-radius:5px"></div>
<div class="a" style="left:17px;top:134px;width:16px;height:1px;background:#5a5a5a;"></div>
<div class="a" style="left:17px;top:137px;width:16px;height:1px;background:#5a5a5a;"></div>
<div class="a" style="left:6px;top:145px;width:37px;height:20px;background:#585858;border-radius:4px 4px 0 0"></div>
<div class="a" style="left:6px;top:166px;width:37px;height:20px;background:#46607f;"></div>
<div class="a" style="left:6px;top:187px;width:37px;height:20px;background:#585858;"></div>
<div class="a" style="left:6px;top:208px;width:37px;height:20px;background:#585858;"></div>
<div class="a" style="left:6px;top:229px;width:37px;height:20px;background:#585858;"></div>
<div class="a" style="left:6px;top:250px;width:37px;height:21px;background:#585858;border-radius:0 0 4px 4px"></div>
<svg style="left:17px;top:146px;" width="16" height="17" viewBox="0 0 16 17"><path d="M4 9.5 H13.6 L12.6 14.2 Q11.8 16 10.2 16 H6.6 Q5 16 4 14Z" fill="#d2d2d2"/><path d="M2 9 L4.6 12.5 M5.2 3.6 V10 M8 1.6 V10 M10.8 2.8 V10 M13.3 5.2 L12.9 10.5" stroke="#d2d2d2" stroke-width="2" stroke-linecap="round" fill="none"/></svg>
<svg style="left:16px;top:166px;" width="18" height="20" viewBox="0 0 18 20"><path d="M9 4 V8 M9 12 V16.2 M2.6 10 H6.8 M11.2 10 H15.4" stroke="#d2d2d2" stroke-width="1.7"/><path d="M6.8 4.6 L9 2.2 L11.2 4.6 M6.8 15.4 L9 17.8 L11.2 15.4 M3.4 7.8 L1 10 L3.4 12.2 M14.6 7.8 L17 10 L14.6 12.2" stroke="#d2d2d2" stroke-width="1.5" fill="none"/></svg>
<svg style="left:17px;top:189px;" width="16" height="16" viewBox="0 0 16 16"><path d="M6.2 1.6 A6.5 6.5 0 0 0 4.6 13.8 M9.8 14.4 A6.5 6.5 0 0 0 11.4 2.2" stroke="#d2d2d2" stroke-width="1.2" fill="none"/><path d="M1.6 10.8 L2.2 14.6 L6 14.2 M14.4 5.2 L13.8 1.4 L10 1.8" stroke="#d2d2d2" stroke-width="1.2" fill="none"/></svg>
<svg style="left:18px;top:211px;" width="14" height="14" viewBox="0 0 14 14"><rect x="0.6" y="0.6" width="12.8" height="12.8" fill="none" stroke="#d2d2d2" stroke-width="1.2"/><rect x="0.6" y="9" width="4.4" height="4.4" fill="none" stroke="#d2d2d2" stroke-width="1.2"/><path d="M5.5 8.5 L11 3 M7.2 3 H11 V6.8" fill="none" stroke="#d2d2d2" stroke-width="1.2"/></svg>
<svg style="left:18px;top:232px;" width="15" height="15" viewBox="0 0 15 15"><path d="M4.5 1.5 H10.5 M4.5 13.5 H10.5 M1.5 4.5 V10.5 M13.5 4.5 V10.5" stroke="#d2d2d2" stroke-width="1.1"/><rect x="0" y="0" width="3" height="3" fill="#d2d2d2"/><rect x="12" y="0" width="3" height="3" fill="#d2d2d2"/><rect x="0" y="12" width="3" height="3" fill="#d2d2d2"/><rect x="12" y="12" width="3" height="3" fill="#d2d2d2"/></svg>
<svg style="left:17px;top:252px;" width="16" height="17" viewBox="0 0 16 17"><circle cx="8" cy="8.5" r="6" fill="none" stroke="#d2d2d2" stroke-width="1.1" stroke-dasharray="5 1.6"/><path d="M8 4.5 V12.5 M4 8.5 H12" stroke="#d2d2d2" stroke-width="1.6"/><path d="M8 3.5 L6.5 5.2 H9.5Z M8 13.5 L6.5 11.8 H9.5Z M3 8.5 L4.7 7 V10Z M13 8.5 L11.3 7 V10Z" fill="#d2d2d2"/><path d="M0 17 V13.5 L3.5 17Z M16 0 V3.5 L12.5 0Z" fill="#d2d2d2"/></svg>
<div class="a" style="left:754px;top:134px;width:17px;height:1px;background:#4d4d4d;"></div>
<div class="a" style="left:754px;top:137px;width:17px;height:1px;background:#4d4d4d;"></div>
<svg style="left:832px;top:142px;" width="7" height="9" viewBox="0 0 7 9"><path d="M1.5 4 V2.5 A2 2 0 0 1 5.5 2.5" fill="none" stroke="#d8dce2" stroke-width="1"/><rect x="0.5" y="4" width="6" height="5" fill="#d8dce2"/></svg>
<svg style="left:774px;top:140px;" width="64" height="68" viewBox="0 0 64 68">
<path d="M23 9 L35 9 L29 28Z" fill="#7cdc3c"/><path d="M23 9 Q29 6 35 9 Q29 11.5 23 9Z" fill="#90ec50"/>
<path d="M57 32 L57 44 L37 38Z" fill="#d2452b"/>
<path d="M0 32 L0 44 L20 38Z" fill="#c8c9cc"/><ellipse cx="1" cy="38" rx="1.5" ry="6" fill="#dcdde0"/>
<path d="M23 66 L35 66 L29 47Z" fill="#c8c9cc"/><ellipse cx="29" cy="66" rx="6" ry="1.5" fill="#dcdde0"/>
<rect x="22" y="31" width="14" height="14" fill="#eef0f8"/>
<path d="M27 1 L29 5 M31 1 L27.5 9" stroke="#fff" stroke-width="1" fill="none"/>
<path d="M58.5 35 L63 41 M63 35 L58.5 41" stroke="#fff" stroke-width="1"/>
</svg>
<svg style="left:778px;top:223px;" width="11" height="10" viewBox="0 0 11 10"><path d="M10 0.5 L1 5 L10 9.5 M10 5 H2" fill="none" stroke="#cfd7e3" stroke-width="1"/></svg>
<div class="t" style="left:790.5px;top:223.00px;font-size:12.5px;color:#cfd7e3;font-weight:400;letter-spacing:0px;">Persp</div>
<div class="a" style="left:1px;top:588px;width:857px;height:2px;background:#191919;"></div>
<div class="a" style="left:1px;top:590px;width:857px;height:19px;background:#232323;border-radius:4px 4px 0 0"></div>
<div class="a" style="left:1px;top:590px;width:86px;height:19px;background:#3c3c3c;border-radius:4px 4px 0 0"></div>
<svg style="left:8px;top:594px;" width="12" height="11" viewBox="0 0 12 11"><rect x="0.6" y="0.6" width="10.8" height="9.8" fill="none" stroke="#c4c4c4" stroke-width="1.2"/><path d="M2.5 3.2 H9.5 M2.5 5.5 H9.5 M2.5 7.8 H7" stroke="#c4c4c4" stroke-width="1.1"/><rect x="0" y="0" width="12" height="2" fill="#c4c4c4"/></svg>
<div class="t" style="left:24.3px;top:595.00px;font-size:12.3px;color:#c4c4c4;font-weight:400;letter-spacing:0px;">Console</div>
<svg style="left:843px;top:594px;" width="4" height="12" viewBox="0 0 4 12"><rect x="0.5" y="0" width="2.5" height="2.5" fill="#c4c4c4"/><rect x="0.5" y="4.3" width="2.5" height="2.5" fill="#c4c4c4"/><rect x="0.5" y="8.6" width="2.5" height="2.5" fill="#c4c4c4"/></svg>
<div class="a" style="left:1px;top:609px;width:857px;height:20px;background:#3c3c3c;"></div>
<div class="a" style="left:1px;top:629px;width:857px;height:1px;background:#232323;"></div>
<div class="t" style="left:5px;top:614.00px;font-size:12.5px;color:#c4c4c4;font-weight:400;letter-spacing:0px;">Clear</div>
<div class="a" style="left:40px;top:613px;width:1px;height:13px;background:#2a2a2a;"></div>
<svg style="left:44px;top:617px;" width="8" height="5" viewBox="0 0 8 5"><path d="M0 0 H8 L4.0 4.6Z" fill="#c4c4c4"/></svg>
<div class="a" style="left:57px;top:610px;width:1px;height:19px;background:#2a2a2a;"></div>
<div class="a" style="left:58px;top:610px;width:58px;height:19px;background:#4a4a4a;"></div>
<div class="t" style="left:61px;top:614.00px;font-size:12.5px;color:#c4c4c4;font-weight:400;letter-spacing:0px;">Collapse</div>
<div class="a" style="left:116px;top:610px;width:1px;height:19px;background:#2a2a2a;"></div>
<div class="t" style="left:121px;top:614.00px;font-size:12.5px;color:#c4c4c4;font-weight:400;letter-spacing:0px;">Error Pause</div>
<div class="a" style="left:189px;top:610px;width:1px;height:19px;background:#2a2a2a;"></div>
<div class="t" style="left:194px;top:614.00px;font-size:12.5px;color:#c4c4c4;font-weight:400;letter-spacing:0px;">Editor</div>
<svg style="left:229px;top:617px;" width="8" height="5" viewBox="0 0 8 5"><path d="M0 0 H8 L4.0 4.6Z" fill="#c4c4c4"/></svg>
<div class="a" style="left:240px;top:610px;width:1px;height:19px;background:#2a2a2a;"></div>
<div class="a" style="left:439px;top:611px;width:300px;height:16px;background:#2a2a2a;border:1px solid #212121;border-radius:4px"></div>
<svg style="left:445px;top:615px;" width="8" height="8" viewBox="0 0 8 8"><circle cx="3" cy="3" r="2.2" fill="none" stroke="#c4c4c4" stroke-width="1.2"/><path d="M4.6 4.6 L7.5 7.5" stroke="#c4c4c4" stroke-width="1.5"/></svg>
<div class="a" style="left:742px;top:610px;width:48px;height:19px;background:#464646;"></div>
<div class="a" style="left:790px;top:610px;width:1px;height:19px;background:#2a2a2a;"></div>
<div class="a" style="left:791px;top:610px;width:32px;height:19px;background:#464646;"></div>
<div class="a" style="left:823px;top:610px;width:1px;height:19px;background:#2a2a2a;"></div>
<div class="a" style="left:824px;top:610px;width:34px;height:19px;background:#464646;"></div>
<svg style="left:746px;top:612px;" width="15" height="15" viewBox="0 0 15 15"><circle cx="7" cy="7" r="7" fill="#e0e0e0"/><path d="M9 12 L13 15 L13 10Z" fill="#e0e0e0"/><path d="M7 3 V8" stroke="#464646" stroke-width="2" stroke-linecap="round"/><circle cx="7" cy="10.8" r="1.1" fill="#464646"/></svg>
<div class="t" style="left:764px;top:614.00px;font-size:12.5px;color:#c4c4c4;font-weight:400;letter-spacing:0px;">949</div>
<svg style="left:794px;top:612px;" width="13" height="13" viewBox="0 0 13 13"><path d="M6.5 0.5 L12.5 12.5 H0.5Z" fill="#7a7a7a"/><path d="M6.5 4.5 V8.5" stroke="#464646" stroke-width="1.6"/><circle cx="6.5" cy="10.5" r="0.9" fill="#464646"/></svg>
<div class="t" style="left:810px;top:614.00px;font-size:12.5px;color:#c4c4c4;font-weight:400;letter-spacing:0px;">0</div>
<svg style="left:827px;top:612px;" width="12" height="14" viewBox="0 0 12 14"><circle cx="6" cy="6.5" r="6" fill="#8a8a8a"/><path d="M6 3 V7.5" stroke="#464646" stroke-width="1.8"/><circle cx="6" cy="10" r="1" fill="#464646"/></svg>
<div class="t" style="left:842px;top:614.00px;font-size:12.5px;color:#c4c4c4;font-weight:400;letter-spacing:0px;">0</div>
<div class="a" style="left:1px;top:630px;width:857px;height:278px;background:#383838;"></div>
<div class="a" style="left:1px;top:630px;width:844px;height:39px;background:#383838;"></div>
<svg style="left:11px;top:638px;" width="28" height="30" viewBox="0 0 28 30"><g transform="scale(1.0)"><circle cx="13" cy="13" r="13" fill="#e8e8e8"/><path d="M18 22 L24 29 L24 18Z" fill="#e8e8e8"/><path d="M13 5 V16" stroke="#383838" stroke-width="3.2" stroke-linecap="round"/><circle cx="13" cy="21" r="2" fill="#383838"/></g></svg>
<div class="a" style="left:41px;top:632px;width:804px;height:34px;overflow:hidden">
<div class="t" style="left:0.5px;top:5.00px;font-size:12.5px;color:#c4c4c4;font-weight:400;letter-spacing:0.14px;">[15:48:23] X1=NaN,Y1=NaN,X2=728.600,Y2=485.645,X3=939.072,Y3=586.950,X4=489.905,Y4=424.027,X5=703.969,Y5=468.060,X6=700.6</div>
<div class="t" style="left:0px;top:20.00px;font-size:12.5px;color:#c4c4c4;font-weight:400;letter-spacing:0px;">UnityEngine.Debug:Log (object)</div>
</div>
<div class="a" style="left:822px;top:643px;width:18px;height:16px;border-radius:8px;background:#585858"></div>
<div class="t" style="left:827px;top:646.00px;font-size:12px;color:#c4c4c4;font-weight:400;letter-spacing:0px;">2</div>
<div class="a" style="left:1px;top:669px;width:844px;height:38px;background:#3f3f3f;"></div>
<svg style="left:11px;top:676px;" width="28" height="30" viewBox="0 0 28 30"><g transform="scale(1.0)"><circle cx="13" cy="13" r="13" fill="#e8e8e8"/><path d="M18 22 L24 29 L24 18Z" fill="#e8e8e8"/><path d="M13 5 V16" stroke="#383838" stroke-width="3.2" stroke-linecap="round"/><circle cx="13" cy="21" r="2" fill="#383838"/></g></svg>
<div class="a" style="left:41px;top:670px;width:804px;height:34px;overflow:hidden">
<div class="t" style="left:0.5px;top:5.00px;font-size:12.5px;color:#c4c4c4;font-weight:400;letter-spacing:0.14px;">[15:48:23] X1=655.338,Y1=475.230,X2=718.971,Y2=490.273,X3=953.884,Y3=580.739,X4=490.191,Y4=425.439,X5=707.249,Y5=476.990,Y6</div>
<div class="t" style="left:0px;top:20.00px;font-size:12.5px;color:#c4c4c4;font-weight:400;letter-spacing:0px;">UnityEngine.Debug:Log (object)</div>
</div>
<div class="a" style="left:822px;top:681px;width:18px;height:16px;border-radius:8px;background:#585858"></div>
<div class="t" style="left:827px;top:684.00px;font-size:12px;color:#c4c4c4;font-weight:400;letter-spacing:0px;">4</div>
<div class="a" style="left:1px;top:707px;width:844px;height:38px;background:#383838;"></div>
<svg style="left:11px;top:714px;" width="28" height="30" viewBox="0 0 28 30"><g transform="scale(1.0)"><circle cx="13" cy="13" r="13" fill="#e8e8e8"/><path d="M18 22 L24 29 L24 18Z" fill="#e8e8e8"/><path d="M13 5 V16" stroke="#383838" stroke-width="3.2" stroke-linecap="round"/><circle cx="13" cy="21" r="2" fill="#383838"/></g></svg>
<div class="a" style="left:41px;top:708px;width:804px;height:34px;overflow:hidden">
<div class="t" style="left:0.5px;top:5.00px;font-size:12.5px;color:#c4c4c4;font-weight:400;letter-spacing:0.14px;">[15:48:23] X1=655.338,Y1=475.230,X2=718.971,Y2=490.273,X3=953.884,Y3=580.739,X4=490.191,Y4=425.439,X5=707.249,Y5=476.990,Y6</div>
<div class="t" style="left:0px;top:20.00px;font-size:12.5px;color:#c4c4c4;font-weight:400;letter-spacing:0px;">UnityEngine.Debug:Log (object)</div>
</div>
<div class="a" style="left:822px;top:719px;width:18px;height:16px;border-radius:8px;background:#585858"></div>
<div class="t" style="left:828px;top:722.00px;font-size:12px;color:#c4c4c4;font-weight:400;letter-spacing:0px;">1</div>
<div class="a" style="left:1px;top:745px;width:844px;height:38px;background:#3f3f3f;"></div>
<svg style="left:11px;top:752px;" width="28" height="30" viewBox="0 0 28 30"><g transform="scale(1.0)"><circle cx="13" cy="13" r="13" fill="#e8e8e8"/><path d="M18 22 L24 29 L24 18Z" fill="#e8e8e8"/><path d="M13 5 V16" stroke="#383838" stroke-width="3.2" stroke-linecap="round"/><circle cx="13" cy="21" r="2" fill="#383838"/></g></svg>
<div class="a" style="left:41px;top:746px;width:804px;height:34px;overflow:hidden">
<div class="t" style="left:0.5px;top:5.00px;font-size:12.5px;color:#c4c4c4;font-weight:400;letter-spacing:0.14px;">[15:48:23] CSV</div>
<div class="t" style="left:0px;top:20.00px;font-size:12.5px;color:#c4c4c4;font-weight:400;letter-spacing:0px;">UnityEngine.Debug:Log (object)</div>
</div>
<svg style="left:127.5px;top:751px" width="46" height="12"><path transform="translate(0.00 0) scale(1.029)" d="M0.5 1 H9.5 M5 1 V7.5 M1.5 3 H8.5 M1.5 3 V10 M8.5 3 V9.5 L7.5 9.2 M1.5 5.2 H8.5 M0 7.5 H10" fill="none" stroke="#c4c4c4" stroke-width="0.97" stroke-linecap="round" stroke-linejoin="round"/><path transform="translate(11.20 0) scale(1.029)" d="M3 0.3 L1.2 4 M2 2.8 H9 M5 0.5 V9.6 M2 6 H8.5 M0.5 9.6 H9.5" fill="none" stroke="#c4c4c4" stroke-width="0.97" stroke-linecap="round" stroke-linejoin="round"/><path transform="translate(22.40 0) scale(1.029)" d="M2.6 0.3 L0.9 3.5 L3.6 3.4 M3.8 1.8 L0.5 7 L4.2 6.5 M2.2 7.2 V10 M0.6 8.3 L0.2 9.8 M3.4 8 L4 9.5 M6.2 0.3 L4.6 3 M5.5 1.8 H9.5 L5 6.5 M6.3 3.2 L10 6.6 M6.5 7 L7.8 7.8 M5.8 9 L8.5 10" fill="none" stroke="#c4c4c4" stroke-width="0.97" stroke-linecap="round" stroke-linejoin="round"/><path transform="translate(33.60 0) scale(1.029)" d="M1 1 H9 L5.5 4.3 M5.5 4.3 V10 L4 9.2" fill="none" stroke="#c4c4c4" stroke-width="0.97" stroke-linecap="round" stroke-linejoin="round"/></svg>
<div class="a" style="left:822px;top:757px;width:18px;height:16px;border-radius:8px;background:#585858"></div>
<div class="t" style="left:828px;top:760.00px;font-size:12px;color:#c4c4c4;font-weight:400;letter-spacing:0px;">1</div>
<div class="a" style="left:1px;top:783px;width:844px;height:41px;background:#383838;"></div>
<svg style="left:11px;top:790px;" width="28" height="30" viewBox="0 0 28 30"><g transform="scale(1.0)"><circle cx="13" cy="13" r="13" fill="#e8e8e8"/><path d="M18 22 L24 29 L24 18Z" fill="#e8e8e8"/><path d="M13 5 V16" stroke="#383838" stroke-width="3.2" stroke-linecap="round"/><circle cx="13" cy="21" r="2" fill="#383838"/></g></svg>
<div class="a" style="left:41px;top:784px;width:804px;height:34px;overflow:hidden">
<div class="t" style="left:0.5px;top:5.00px;font-size:12.5px;color:#c4c4c4;font-weight:400;letter-spacing:0.14px;">[15:48:25] EyeTribe: </div>
<div class="t" style="left:0px;top:20.00px;font-size:12.5px;color:#c4c4c4;font-weight:400;letter-spacing:0px;">UnityEngine.Debug:Log (object)</div>
</div>
<svg style="left:155.6px;top:789px" width="103" height="12"><path transform="translate(0.00 0) scale(1.029)" d="M0.3 3 H3.6 M2 0.3 V9.8 L1 9.2 M0.3 7.2 L3.7 5.6 M7 0.2 V1.5 M4.5 1.8 H9.8 M5.6 2.6 L6.1 4 M8.6 2.6 L8 4 M4.3 4.4 H10 M4.3 7 H10 M6.6 4.8 L5.4 8 L9.2 10 M8.6 7 L5 10" fill="none" stroke="#c4c4c4" stroke-width="0.97" stroke-linecap="round" stroke-linejoin="round"/><path transform="translate(11.30 0) scale(1.029)" d="M2.6 0.3 L0.9 3.5 L3.6 3.4 M3.8 1.8 L0.5 7 L4.2 6.5 M2.2 7.2 V10 M0.6 8.3 L0.2 9.8 M3.4 8 L4 9.5 M7.2 0.3 V2.6 M4.8 1.5 H9.6 M5.2 2.8 H9.2 M4.6 4.2 H10 M4.6 4.2 V5.4 M10 4.2 V5.4 M6.3 5.5 Q6.3 9 4.6 10 M8.2 5.5 V9.3 Q8.2 9.9 9 9.9 H10" fill="none" stroke="#c4c4c4" stroke-width="0.97" stroke-linecap="round" stroke-linejoin="round"/><path transform="translate(22.60 0) scale(1.029)" d="M1 2.2 H8 M4.6 0.3 Q3.5 4 1.5 6.2 Q4.5 3.8 6 5.2 Q6.3 6.5 5.2 8 M8.8 5.2 Q3 7 3.5 9 Q4 10 9 9.8" fill="none" stroke="#c4c4c4" stroke-width="0.97" stroke-linecap="round" stroke-linejoin="round"/><path transform="translate(33.90 0) scale(1.029)" d="M1 0.6 V10 M1 0.6 H4 V4 H1 M1 2.3 H4 M6 0.6 H9.2 V9.5 L8.2 9.2 M6 0.6 V4 H9.2 M6 2.3 H9.2 M3 6 H7.5 M6 5 V9.3 L5.2 9 M6 6.2 L3.5 9" fill="none" stroke="#c4c4c4" stroke-width="0.97" stroke-linecap="round" stroke-linejoin="round"/><path transform="translate(45.20 0) scale(1.029)" d="M2.2 1.5 Q1.8 6 2.6 8 Q3.6 10 8.8 8.3 M6.5 0.8 L7 3 M8.2 0.4 L8.8 2.6" fill="none" stroke="#c4c4c4" stroke-width="0.97" stroke-linecap="round" stroke-linejoin="round"/><path transform="translate(56.50 0) scale(1.029)" d="M1.5 2.2 H8.6 M1.8 4.8 H8.4 M5 0.3 V8.6 Q4 7 2.5 7.6 Q1.6 8.6 2.8 9.6 Q5.5 10.2 9.2 8.4" fill="none" stroke="#c4c4c4" stroke-width="0.97" stroke-linecap="round" stroke-linejoin="round"/><path transform="translate(67.80 0) scale(1.029)" d="M3 0.5 V7.6 Q3.2 10 5.2 9.8 Q7.6 9.4 9 7.2" fill="none" stroke="#c4c4c4" stroke-width="0.97" stroke-linecap="round" stroke-linejoin="round"/><path transform="translate(79.10 0) scale(1.029)" d="M0.6 3 H5.2 M3.2 0.3 Q2.6 5 0.9 9.8 M5.8 5 H9.4 M5.6 7.4 Q5.4 9.6 7.2 9.7 H9.8" fill="none" stroke="#c4c4c4" stroke-width="0.97" stroke-linecap="round" stroke-linejoin="round"/><path transform="translate(90.40 0) scale(1.029)" d="M2.2 7 A1.6 1.6 0 1 1 2.19 7" fill="none" stroke="#c4c4c4" stroke-width="0.97" stroke-linecap="round" stroke-linejoin="round"/></svg>
<div class="a" style="left:822px;top:795px;width:18px;height:16px;border-radius:8px;background:#585858"></div>
<div class="t" style="left:828px;top:798.00px;font-size:12px;color:#c4c4c4;font-weight:400;letter-spacing:0px;">1</div>
<div class="a" style="left:845px;top:630px;width:13px;height:194px;background:#3e3e3e;"></div>
<svg style="left:847px;top:634px;" width="9" height="6" viewBox="0 0 9 6"><path d="M0.5 5.5 L4.5 0.5 L8.5 5.5Z" fill="#c4c4c4"/></svg>
<div class="a" style="left:847px;top:790px;width:10px;height:19px;background:#5e5e5e;border-radius:5px"></div>
<svg style="left:847px;top:814px;" width="9" height="6" viewBox="0 0 9 6"><path d="M0.5 0.5 H8.5 L4.5 5.5Z" fill="#c4c4c4"/></svg>
<div class="a" style="left:1px;top:824px;width:857px;height:1px;background:#232323;"></div>
<div class="a" style="left:858px;top:81px;width:2px;height:827px;background:#191919;"></div>
<div class="a" style="left:860px;top:81px;width:263px;height:19px;background:#232323;border-radius:4px 4px 0 0"></div>
<div class="a" style="left:860px;top:81px;width:96px;height:19px;background:#3c3c3c;border-radius:4px 4px 0 0"></div>
<svg style="left:868px;top:86px;" width="14" height="11" viewBox="0 0 14 11"><path d="M4.5 1.5 H13.5 M6 5.5 H13.5 M6 9.5 H13.5" stroke="#c4c4c4" stroke-width="1.3"/><path d="M0.5 1.5 L2.8 0 V3Z M2.5 5.5 L4.6 4 V7Z M2.5 9.5 L4.6 8 V11Z" fill="#c4c4c4"/><path d="M2.5 1.5 H4.5 M4 3 V9.5" stroke="#c4c4c4" stroke-width="0.8"/></svg>
<div class="t" style="left:884.2px;top:86.00px;font-size:12.6px;color:#c4c4c4;font-weight:400;letter-spacing:0px;">Hierarchy</div>
<svg style="left:1088px;top:85px;" width="9" height="11" viewBox="0 0 9 11"><path d="M1.8 5 V3.2 A2.7 2.7 0 0 1 7 2.4" fill="none" stroke="#c4c4c4" stroke-width="1.3"/><rect x="0.6" y="5.3" width="7.8" height="5" fill="none" stroke="#c4c4c4" stroke-width="1.3"/></svg>
<svg style="left:1109px;top:85px;" width="4" height="12" viewBox="0 0 4 12"><rect x="0.5" y="0" width="2.5" height="2.5" fill="#c4c4c4"/><rect x="0.5" y="4.3" width="2.5" height="2.5" fill="#c4c4c4"/><rect x="0.5" y="8.6" width="2.5" height="2.5" fill="#c4c4c4"/></svg>
<div class="a" style="left:860px;top:100px;width:263px;height:20px;background:#3c3c3c;"></div>
<svg style="left:867px;top:104px;" width="13" height="13" viewBox="0 0 13 13"><path d="M6.5 0 V13 M0 6.5 H13" stroke="#d0d0d0" stroke-width="2"/></svg>
<svg style="left:884px;top:108px;" width="8" height="5" viewBox="0 0 8 5"><path d="M0 0 H8 L4.0 4.6Z" fill="#c4c4c4"/></svg>
<div class="a" style="left:903px;top:102px;width:217px;height:16px;background:#2a2a2a;border:1px solid #212121;border-radius:4px"></div>
<div class="a" style="left:1101px;top:103px;width:18px;height:14px;background:#333333;border-radius:0 3px 3px 0"></div>
<svg style="left:908px;top:105px;" width="10" height="9" viewBox="0 0 10 9"><circle cx="3" cy="3" r="2.2" fill="none" stroke="#c4c4c4" stroke-width="1.2"/><path d="M4.6 4.6 L7 7" stroke="#c4c4c4" stroke-width="1.5"/><path d="M6.8 2.5 H9.6 L8.2 4Z" fill="#c4c4c4"/></svg>
<div class="t" style="left:922px;top:105.00px;font-size:12.5px;color:#7d7d7d;font-weight:400;letter-spacing:0px;">All</div>
<svg style="left:1104px;top:104px;" width="13" height="12" viewBox="0 0 13 12"><rect x="0.6" y="6.6" width="4.8" height="4.8" fill="none" stroke="#c4c4c4" stroke-width="1.1"/><rect x="3.6" y="0.6" width="8.8" height="8.8" fill="none" stroke="#c4c4c4" stroke-width="1.1"/><path d="M5.5 7.5 L10 3 M7 3 H10 V6" fill="none" stroke="#c4c4c4" stroke-width="1.1"/></svg>
<div class="a" style="left:860px;top:120px;width:263px;height:1px;background:#232323;"></div>
<div class="a" style="left:860px;top:121px;width:263px;height:355px;background:#383838;"></div>
<div class="a" style="left:860px;top:121px;width:263px;height:15px;background:#4a4a4a;"></div>
<div class="a" style="left:860px;top:136px;width:32px;height:340px;background:#2b2b2b;"></div>
<svg style="left:895px;top:126px;" width="9" height="7" viewBox="0 0 9 7"><path d="M0 0 H9 L4.5 7Z" fill="#8a8a8a"/></svg>
<svg style="left:907px;top:122px;" width="14" height="14" viewBox="0 0 14 14"><path d="M7 0.3 L13.3 3.9 V10.1 L7 13.7 L0.7 10.1 V3.9Z" fill="#f0f0f0"/><path d="M7 0 V3.2" stroke="#4a4a4a" stroke-width="1.6"/><path d="M3.3 4.6 L7 2.6 L10.7 4.6 L7 6.6Z" fill="#4a4a4a"/><path d="M2.6 5.6 L5.9 7.5 V11.6 L2.6 9.7Z M11.4 5.6 L8.1 7.5 V11.6 L11.4 9.7Z" fill="#4a4a4a"/><path d="M0.4 10.4 L2.8 9.2 M13.6 10.4 L11.2 9.2" stroke="#4a4a4a" stroke-width="1.2"/></svg>
<div class="t" style="left:925.5px;top:123.00px;font-size:12.2px;color:#d2d2d2;font-weight:700;letter-spacing:0px;">SampleScene</div>
<svg style="left:1109px;top:123px;" width="4" height="12" viewBox="0 0 4 12"><rect x="0.5" y="0" width="2.5" height="2.5" fill="#c4c4c4"/><rect x="0.5" y="4.3" width="2.5" height="2.5" fill="#c4c4c4"/><rect x="0.5" y="8.6" width="2.5" height="2.5" fill="#c4c4c4"/></svg>
<svg style="left:921px;top:138px;" width="14" height="14" viewBox="0 0 14 14"><path d="M6.5 0.7 L12.3 3.6 V9.9 L6.5 12.8 L0.7 9.9 V3.6Z M0.7 3.6 L6.5 6.5 L12.3 3.6 M6.5 6.5 V12.8" fill="none" stroke="#c4c4c4" stroke-width="1.1" stroke-linejoin="round"/></svg>
<div class="t" style="left:938px;top:139.00px;font-size:12.6px;color:#d2d2d2;font-weight:400;letter-spacing:0px;">Main Camera</div>
<svg style="left:921px;top:154px;" width="14" height="14" viewBox="0 0 14 14"><path d="M6.5 0.7 L12.3 3.6 V9.9 L6.5 12.8 L0.7 9.9 V3.6Z M0.7 3.6 L6.5 6.5 L12.3 3.6 M6.5 6.5 V12.8" fill="none" stroke="#c4c4c4" stroke-width="1.1" stroke-linejoin="round"/></svg>
<div class="t" style="left:938px;top:155.00px;font-size:12.6px;color:#d2d2d2;font-weight:400;letter-spacing:0px;">Directional Light</div>
<svg style="left:921px;top:170px;" width="14" height="14" viewBox="0 0 14 14"><path d="M6.5 0.7 L12.3 3.6 V9.9 L6.5 12.8 L0.7 9.9 V3.6Z M0.7 3.6 L6.5 6.5 L12.3 3.6 M6.5 6.5 V12.8" fill="none" stroke="#c4c4c4" stroke-width="1.1" stroke-linejoin="round"/></svg>
<div class="t" style="left:938px;top:171.00px;font-size:12.6px;color:#d2d2d2;font-weight:400;letter-spacing:0px;">Cube</div>
<svg style="left:921px;top:186px;" width="14" height="14" viewBox="0 0 14 14"><path d="M6.5 0.7 L12.3 3.6 V9.9 L6.5 12.8 L0.7 9.9 V3.6Z M0.7 3.6 L6.5 6.5 L12.3 3.6 M6.5 6.5 V12.8" fill="none" stroke="#c4c4c4" stroke-width="1.1" stroke-linejoin="round"/></svg>
<div class="t" style="left:938px;top:187.00px;font-size:12.6px;color:#d2d2d2;font-weight:400;letter-spacing:0px;">VideoPlayerController</div>
<svg style="left:921px;top:202px;" width="14" height="14" viewBox="0 0 14 14"><path d="M6.5 0.7 L12.3 3.6 V9.9 L6.5 12.8 L0.7 9.9 V3.6Z M0.7 3.6 L6.5 6.5 L12.3 3.6 M6.5 6.5 V12.8" fill="none" stroke="#c4c4c4" stroke-width="1.1" stroke-linejoin="round"/></svg>
<div class="t" style="left:938px;top:203.00px;font-size:12.6px;color:#d2d2d2;font-weight:400;letter-spacing:0px;">Canvas</div>
<svg style="left:921px;top:218px;" width="14" height="14" viewBox="0 0 14 14"><path d="M6.5 0.7 L12.3 3.6 V9.9 L6.5 12.8 L0.7 9.9 V3.6Z M0.7 3.6 L6.5 6.5 L12.3 3.6 M6.5 6.5 V12.8" fill="none" stroke="#c4c4c4" stroke-width="1.1" stroke-linejoin="round"/></svg>
<div class="t" style="left:938px;top:219.00px;font-size:12.6px;color:#d2d2d2;font-weight:400;letter-spacing:0px;">EventSystem</div>
<svg style="left:909px;top:205px;" width="6" height="9" viewBox="0 0 6 9"><path d="M0 0 L6 4.5 L0 9Z" fill="#8a8a8a"/></svg>
<div class="a" style="left:860px;top:476px;width:263px;height:2px;background:#191919;"></div>
<div class="a" style="left:860px;top:478px;width:263px;height:19px;background:#232323;border-radius:4px 4px 0 0"></div>
<div class="a" style="left:860px;top:478px;width:81px;height:19px;background:#3c3c3c;border-radius:4px 4px 0 0"></div>
<svg style="left:867px;top:484px;" width="13" height="11" viewBox="0 0 13 11"><path d="M0.5 1.5 Q0.5 0.5 1.5 0.5 H5 L6.5 2.5 H11.5 Q12.5 2.5 12.5 3.5 V9.5 Q12.5 10.5 11.5 10.5 H1.5 Q0.5 10.5 0.5 9.5Z" fill="#c4c4c4"/></svg>
<div class="t" style="left:884.5px;top:483.00px;font-size:12.6px;color:#c4c4c4;font-weight:400;letter-spacing:0px;">Project</div>
<svg style="left:1088px;top:482px;" width="9" height="11" viewBox="0 0 9 11"><path d="M1.8 5 V3.2 A2.7 2.7 0 0 1 7 2.4" fill="none" stroke="#c4c4c4" stroke-width="1.3"/><rect x="0.6" y="5.3" width="7.8" height="5" fill="none" stroke="#c4c4c4" stroke-width="1.3"/></svg>
<svg style="left:1109px;top:482px;" width="4" height="12" viewBox="0 0 4 12"><rect x="0.5" y="0" width="2.5" height="2.5" fill="#c4c4c4"/><rect x="0.5" y="4.3" width="2.5" height="2.5" fill="#c4c4c4"/><rect x="0.5" y="8.6" width="2.5" height="2.5" fill="#c4c4c4"/></svg>
<div class="a" style="left:860px;top:497px;width:263px;height:20px;background:#3c3c3c;"></div>
<svg style="left:867px;top:501px;" width="13" height="13" viewBox="0 0 13 13"><path d="M6.5 0 V13 M0 6.5 H13" stroke="#d0d0d0" stroke-width="2"/></svg>
<svg style="left:884px;top:505px;" width="8" height="5" viewBox="0 0 8 5"><path d="M0 0 H8 L4.0 4.6Z" fill="#c4c4c4"/></svg>
<div class="a" style="left:905px;top:499px;width:103px;height:16px;background:#2a2a2a;border:1px solid #212121;border-radius:4px"></div>
<div class="a" style="left:990px;top:500px;width:17px;height:14px;background:#333333;border-radius:0 3px 3px 0"></div>
<svg style="left:911px;top:503px;" width="8" height="8" viewBox="0 0 8 8"><circle cx="3" cy="3" r="2.2" fill="none" stroke="#c4c4c4" stroke-width="1.2"/><path d="M4.6 4.6 L7 7" stroke="#c4c4c4" stroke-width="1.5"/></svg>
<svg style="left:993px;top:501px;" width="13" height="12" viewBox="0 0 13 12"><rect x="0.6" y="6.6" width="4.8" height="4.8" fill="none" stroke="#c4c4c4" stroke-width="1.1"/><rect x="3.6" y="0.6" width="8.8" height="8.8" fill="none" stroke="#c4c4c4" stroke-width="1.1"/><path d="M5.5 7.5 L10 3 M7 3 H10 V6" fill="none" stroke="#c4c4c4" stroke-width="1.1"/></svg>
<div class="a" style="left:1010px;top:498px;width:1px;height:19px;background:#2a2a2a;"></div>
<div class="a" style="left:1036px;top:498px;width:1px;height:19px;background:#2a2a2a;"></div>
<div class="a" style="left:1062px;top:498px;width:1px;height:19px;background:#2a2a2a;"></div>
<div class="a" style="left:1088px;top:498px;width:1px;height:19px;background:#2a2a2a;"></div>
<svg style="left:1017px;top:500px;" width="13" height="13" viewBox="0 0 13 13"><rect x="0.5" y="0" width="6" height="6" fill="#c4c4c4"/><circle cx="4" cy="9" r="3.8" fill="#c4c4c4"/><path d="M9 3.5 L13 10 H5.5Z" fill="#c4c4c4"/></svg>
<svg style="left:1042px;top:500px;" width="13" height="13" viewBox="0 0 13 13"><path d="M7 0.5 H12.5 V6 L6 12.5 L0.5 7Z" fill="#c4c4c4"/><circle cx="10" cy="3" r="1.1" fill="#3c3c3c"/></svg>
<svg style="left:1068px;top:500px;" width="13" height="13" viewBox="0 0 13 13"><path d="M6.5 0.5 L8.3 4.5 L12.6 4.9 L9.3 7.8 L10.3 12.2 L6.5 9.9 L2.7 12.2 L3.7 7.8 L0.4 4.9 L4.7 4.5Z" fill="#7a7a7a"/></svg>
<svg style="left:1093px;top:501px;" width="14" height="11" viewBox="0 0 14 11"><path d="M0.5 5.5 Q7 -1.5 13.5 5.5 Q7 12.5 0.5 5.5Z" fill="none" stroke="#c4c4c4" stroke-width="1.1"/><circle cx="7" cy="5.5" r="2" fill="#c4c4c4"/><path d="M2 11 L12 0" stroke="#3c3c3c" stroke-width="2.4"/><path d="M2 11 L12 0" stroke="#c4c4c4" stroke-width="1.1"/></svg>
<div class="t" style="left:1110.5px;top:503.00px;font-size:12.5px;color:#c4c4c4;font-weight:400;letter-spacing:0px;">3</div>
<div class="a" style="left:860px;top:517px;width:263px;height:1px;background:#232323;"></div>
<div class="a" style="left:860px;top:518px;width:263px;height:390px;background:#383838;"></div>
<div class="a" style="left:973px;top:518px;width:13px;height:370px;background:#3a3a3a;"></div>
<div class="a" style="left:986px;top:518px;width:1px;height:390px;background:#232323;"></div>
<svg style="left:976px;top:523px;" width="9" height="6" viewBox="0 0 9 6"><path d="M0.5 5.5 L4.5 0.5 L8.5 5.5Z" fill="#c4c4c4"/></svg>
<div class="a" style="left:975px;top:534px;width:10px;height:334px;background:#5e5e5e;border-radius:5px"></div>
<svg style="left:976px;top:897px;" width="9" height="6" viewBox="0 0 9 6"><path d="M0.5 0.5 H8.5 L4.5 5.5Z" fill="#c4c4c4"/></svg>
<div class="a" style="left:860px;top:661px;width:113px;height:16px;background:#4a4a4a;"></div>
<div class="a" style="left:860px;top:518px;width:113px;height:390px;overflow:hidden">
<svg style="left:4px;top:7px;" width="9" height="7" viewBox="0 0 9 7"><path d="M0 0 H9 L4.5 7Z" fill="#8a8a8a"/></svg>
<svg style="left:18px;top:1px;" width="13" height="13" viewBox="0 0 13 13"><path d="M6.5 0.5 L8.3 4.5 L12.6 4.9 L9.3 7.8 L10.3 12.2 L6.5 9.9 L2.7 12.2 L3.7 7.8 L0.4 4.9 L4.7 4.5Z" fill="#c4c4c4"/></svg>
<div class="t" style="left:35.5px;top:2.00px;font-size:12.3px;color:#d2d2d2;font-weight:700;letter-spacing:0px;">Favorites</div>
<svg style="left:32px;top:18px;" width="11" height="11" viewBox="0 0 11 11"><circle cx="4.5" cy="4.5" r="3.8" fill="none" stroke="#c4c4c4" stroke-width="1.2"/><path d="M7.2 7.2 L10 10" stroke="#c4c4c4" stroke-width="1.6"/></svg>
<div class="t" style="left:48px;top:18.00px;font-size:12.6px;color:#d2d2d2;font-weight:400;letter-spacing:0px;">All Materials</div>
<svg style="left:32px;top:34px;" width="11" height="11" viewBox="0 0 11 11"><circle cx="4.5" cy="4.5" r="3.8" fill="none" stroke="#c4c4c4" stroke-width="1.2"/><path d="M7.2 7.2 L10 10" stroke="#c4c4c4" stroke-width="1.6"/></svg>
<div class="t" style="left:48px;top:34.00px;font-size:12.6px;color:#d2d2d2;font-weight:400;letter-spacing:0px;">All Models</div>
<svg style="left:32px;top:50px;" width="11" height="11" viewBox="0 0 11 11"><circle cx="4.5" cy="4.5" r="3.8" fill="none" stroke="#c4c4c4" stroke-width="1.2"/><path d="M7.2 7.2 L10 10" stroke="#c4c4c4" stroke-width="1.6"/></svg>
<div class="t" style="left:48px;top:50.00px;font-size:12.6px;color:#d2d2d2;font-weight:400;letter-spacing:0px;">All Prefabs</div>
<svg style="left:4px;top:84px;" width="9" height="7" viewBox="0 0 9 7"><path d="M0 0 H9 L4.5 7Z" fill="#8a8a8a"/></svg>
<svg style="left:18px;top:81px;" width="14" height="11" viewBox="0 0 14 11"><path d="M0.5 10.5 V1.5 Q0.5 0.5 1.5 0.5 H4.5 L6 2.5 H10.5 Q11.5 2.5 11.5 3.5 V4.5 H3 L0.5 10.5 H11 L13.5 4.5 H3" fill="none" stroke="#c4c4c4" stroke-width="1.1"/><path d="M3 4.5 H13.5 L11 10.5 H0.5Z" fill="#c4c4c4"/></svg>
<div class="t" style="left:35.5px;top:81.00px;font-size:12.3px;color:#d2d2d2;font-weight:700;letter-spacing:0px;">Assets</div>
<svg style="left:32px;top:97px;" width="13" height="11" viewBox="0 0 13 11"><path d="M0.5 1.5 Q0.5 0.5 1.5 0.5 H5 L6.5 2.5 H11.5 Q12.5 2.5 12.5 3.5 V9.5 Q12.5 10.5 11.5 10.5 H1.5 Q0.5 10.5 0.5 9.5Z" fill="#c4c4c4"/></svg>
<div class="t" style="left:48px;top:97.00px;font-size:12.6px;color:#d2d2d2;font-weight:400;letter-spacing:0px;">Plugins</div>
<svg style="left:32px;top:113px;" width="13" height="11" viewBox="0 0 13 11"><path d="M0.5 1.5 Q0.5 0.5 1.5 0.5 H5 L6.5 2.5 H11.5 Q12.5 2.5 12.5 3.5 V9.5 Q12.5 10.5 11.5 10.5 H1.5 Q0.5 10.5 0.5 9.5Z" fill="#c4c4c4"/></svg>
<div class="t" style="left:48px;top:113.00px;font-size:12.6px;color:#d2d2d2;font-weight:400;letter-spacing:0px;">result</div>
<svg style="left:32px;top:129px;" width="13" height="11" viewBox="0 0 13 11"><path d="M0.5 1.5 Q0.5 0.5 1.5 0.5 H5 L6.5 2.5 H11.5 Q12.5 2.5 12.5 3.5 V9.5 Q12.5 10.5 11.5 10.5 H1.5 Q0.5 10.5 0.5 9.5Z" fill="#c4c4c4"/></svg>
<div class="t" style="left:48px;top:129.00px;font-size:12.6px;color:#d2d2d2;font-weight:400;letter-spacing:0px;">Scenes</div>
<svg style="left:32px;top:145px;" width="13" height="11" viewBox="0 0 13 11"><path d="M0.6 1.5 Q0.6 0.6 1.5 0.6 H5 L6.5 2.6 H11.5 Q12.4 2.6 12.4 3.5 V9.5 Q12.4 10.4 11.5 10.4 H1.5 Q0.6 10.4 0.6 9.5Z" fill="none" stroke="#c4c4c4" stroke-width="1.1"/></svg>
<div class="t" style="left:48px;top:145.00px;font-size:12.6px;color:#d2d2d2;font-weight:400;letter-spacing:0px;">SCRIPT</div>
<svg style="left:32px;top:161px;" width="13" height="11" viewBox="0 0 13 11"><path d="M0.5 1.5 Q0.5 0.5 1.5 0.5 H5 L6.5 2.5 H11.5 Q12.5 2.5 12.5 3.5 V9.5 Q12.5 10.5 11.5 10.5 H1.5 Q0.5 10.5 0.5 9.5Z" fill="#c4c4c4"/></svg>
<div class="t" style="left:48px;top:161.00px;font-size:12.6px;color:#d2d2d2;font-weight:400;letter-spacing:0px;">StreamingAssets</div>
<svg style="left:4px;top:180px;" width="9" height="7" viewBox="0 0 9 7"><path d="M0 0 H9 L4.5 7Z" fill="#8a8a8a"/></svg>
<svg style="left:18px;top:177px;" width="14" height="11" viewBox="0 0 14 11"><path d="M0.5 10.5 V1.5 Q0.5 0.5 1.5 0.5 H4.5 L6 2.5 H10.5 Q11.5 2.5 11.5 3.5 V4.5 H3 L0.5 10.5 H11 L13.5 4.5 H3" fill="none" stroke="#c4c4c4" stroke-width="1.1"/><path d="M3 4.5 H13.5 L11 10.5 H0.5Z" fill="#c4c4c4"/></svg>
<div class="t" style="left:35.5px;top:177.00px;font-size:12.3px;color:#d2d2d2;font-weight:700;letter-spacing:0px;">Packages</div>
<svg style="left:20px;top:194px;" width="6" height="9" viewBox="0 0 6 9"><path d="M0 0 L6 4.5 L0 9Z" fill="#8a8a8a"/></svg>
<svg style="left:32px;top:193px;" width="13" height="11" viewBox="0 0 13 11"><path d="M0.5 1.5 Q0.5 0.5 1.5 0.5 H5 L6.5 2.5 H11.5 Q12.5 2.5 12.5 3.5 V9.5 Q12.5 10.5 11.5 10.5 H1.5 Q0.5 10.5 0.5 9.5Z" fill="#c4c4c4"/></svg>
<div class="t" style="left:48px;top:193.00px;font-size:12.6px;color:#d2d2d2;font-weight:400;letter-spacing:0px;">Code Coverage</div>
<svg style="left:20px;top:210px;" width="6" height="9" viewBox="0 0 6 9"><path d="M0 0 L6 4.5 L0 9Z" fill="#8a8a8a"/></svg>
<svg style="left:32px;top:209px;" width="13" height="11" viewBox="0 0 13 11"><path d="M0.5 1.5 Q0.5 0.5 1.5 0.5 H5 L6.5 2.5 H11.5 Q12.5 2.5 12.5 3.5 V9.5 Q12.5 10.5 11.5 10.5 H1.5 Q0.5 10.5 0.5 9.5Z" fill="#c4c4c4"/></svg>
<div class="t" style="left:48px;top:209.00px;font-size:12.6px;color:#d2d2d2;font-weight:400;letter-spacing:0px;">Custom NUnit</div>
<svg style="left:20px;top:226px;" width="6" height="9" viewBox="0 0 6 9"><path d="M0 0 L6 4.5 L0 9Z" fill="#8a8a8a"/></svg>
<svg style="left:32px;top:225px;" width="13" height="11" viewBox="0 0 13 11"><path d="M0.5 1.5 Q0.5 0.5 1.5 0.5 H5 L6.5 2.5 H11.5 Q12.5 2.5 12.5 3.5 V9.5 Q12.5 10.5 11.5 10.5 H1.5 Q0.5 10.5 0.5 9.5Z" fill="#c4c4c4"/></svg>
<div class="t" style="left:48px;top:225.00px;font-size:12.6px;color:#d2d2d2;font-weight:400;letter-spacing:0px;">Editor Coroutines</div>
<svg style="left:20px;top:242px;" width="6" height="9" viewBox="0 0 6 9"><path d="M0 0 L6 4.5 L0 9Z" fill="#8a8a8a"/></svg>
<svg style="left:32px;top:241px;" width="13" height="11" viewBox="0 0 13 11"><path d="M0.5 1.5 Q0.5 0.5 1.5 0.5 H5 L6.5 2.5 H11.5 Q12.5 2.5 12.5 3.5 V9.5 Q12.5 10.5 11.5 10.5 H1.5 Q0.5 10.5 0.5 9.5Z" fill="#c4c4c4"/></svg>
<div class="t" style="left:48px;top:241.00px;font-size:12.6px;color:#d2d2d2;font-weight:400;letter-spacing:0px;">JetBrains Rider</div>
<svg style="left:20px;top:258px;" width="6" height="9" viewBox="0 0 6 9"><path d="M0 0 L6 4.5 L0 9Z" fill="#8a8a8a"/></svg>
<svg style="left:32px;top:257px;" width="13" height="11" viewBox="0 0 13 11"><path d="M0.5 1.5 Q0.5 0.5 1.5 0.5 H5 L6.5 2.5 H11.5 Q12.5 2.5 12.5 3.5 V9.5 Q12.5 10.5 11.5 10.5 H1.5 Q0.5 10.5 0.5 9.5Z" fill="#c4c4c4"/></svg>
<div class="t" style="left:48px;top:257.00px;font-size:12.6px;color:#d2d2d2;font-weight:400;letter-spacing:0px;">Profile Analyzer</div>
<svg style="left:20px;top:274px;" width="6" height="9" viewBox="0 0 6 9"><path d="M0 0 L6 4.5 L0 9Z" fill="#8a8a8a"/></svg>
<svg style="left:32px;top:273px;" width="13" height="11" viewBox="0 0 13 11"><path d="M0.5 1.5 Q0.5 0.5 1.5 0.5 H5 L6.5 2.5 H11.5 Q12.5 2.5 12.5 3.5 V9.5 Q12.5 10.5 11.5 10.5 H1.5 Q0.5 10.5 0.5 9.5Z" fill="#c4c4c4"/></svg>
<div class="t" style="left:48px;top:273.00px;font-size:12.6px;color:#d2d2d2;font-weight:400;letter-spacing:0px;">Settings Manager</div>
<svg style="left:20px;top:290px;" width="6" height="9" viewBox="0 0 6 9"><path d="M0 0 L6 4.5 L0 9Z" fill="#8a8a8a"/></svg>
<svg style="left:32px;top:289px;" width="13" height="11" viewBox="0 0 13 11"><path d="M0.5 1.5 Q0.5 0.5 1.5 0.5 H5 L6.5 2.5 H11.5 Q12.5 2.5 12.5 3.5 V9.5 Q12.5 10.5 11.5 10.5 H1.5 Q0.5 10.5 0.5 9.5Z" fill="#c4c4c4"/></svg>
<div class="t" style="left:48px;top:289.00px;font-size:12.6px;color:#d2d2d2;font-weight:400;letter-spacing:0px;">Test Framework</div>
<svg style="left:20px;top:306px;" width="6" height="9" viewBox="0 0 6 9"><path d="M0 0 L6 4.5 L0 9Z" fill="#8a8a8a"/></svg>
<svg style="left:32px;top:305px;" width="13" height="11" viewBox="0 0 13 11"><path d="M0.5 1.5 Q0.5 0.5 1.5 0.5 H5 L6.5 2.5 H11.5 Q12.5 2.5 12.5 3.5 V9.5 Q12.5 10.5 11.5 10.5 H1.5 Q0.5 10.5 0.5 9.5Z" fill="#c4c4c4"/></svg>
<div class="t" style="left:48px;top:305.00px;font-size:12.6px;color:#d2d2d2;font-weight:400;letter-spacing:0px;">TextMeshPro</div>
<svg style="left:20px;top:322px;" width="6" height="9" viewBox="0 0 6 9"><path d="M0 0 L6 4.5 L0 9Z" fill="#8a8a8a"/></svg>
<svg style="left:32px;top:321px;" width="13" height="11" viewBox="0 0 13 11"><path d="M0.5 1.5 Q0.5 0.5 1.5 0.5 H5 L6.5 2.5 H11.5 Q12.5 2.5 12.5 3.5 V9.5 Q12.5 10.5 11.5 10.5 H1.5 Q0.5 10.5 0.5 9.5Z" fill="#c4c4c4"/></svg>
<div class="t" style="left:48px;top:321.00px;font-size:12.6px;color:#d2d2d2;font-weight:400;letter-spacing:0px;">Timeline</div>
<svg style="left:20px;top:338px;" width="6" height="9" viewBox="0 0 6 9"><path d="M0 0 L6 4.5 L0 9Z" fill="#8a8a8a"/></svg>
<svg style="left:32px;top:337px;" width="13" height="11" viewBox="0 0 13 11"><path d="M0.5 1.5 Q0.5 0.5 1.5 0.5 H5 L6.5 2.5 H11.5 Q12.5 2.5 12.5 3.5 V9.5 Q12.5 10.5 11.5 10.5 H1.5 Q0.5 10.5 0.5 9.5Z" fill="#c4c4c4"/></svg>
<div class="t" style="left:48px;top:337.00px;font-size:12.6px;color:#d2d2d2;font-weight:400;letter-spacing:0px;">Unity UI</div>
<svg style="left:20px;top:354px;" width="6" height="9" viewBox="0 0 6 9"><path d="M0 0 L6 4.5 L0 9Z" fill="#8a8a8a"/></svg>
<svg style="left:32px;top:353px;" width="13" height="11" viewBox="0 0 13 11"><path d="M0.5 1.5 Q0.5 0.5 1.5 0.5 H5 L6.5 2.5 H11.5 Q12.5 2.5 12.5 3.5 V9.5 Q12.5 10.5 11.5 10.5 H1.5 Q0.5 10.5 0.5 9.5Z" fill="#c4c4c4"/></svg>
<div class="t" style="left:48px;top:353.00px;font-size:12.6px;color:#d2d2d2;font-weight:400;letter-spacing:0px;">Version Control</div>
<svg style="left:20px;top:370px;" width="6" height="9" viewBox="0 0 6 9"><path d="M0 0 L6 4.5 L0 9Z" fill="#8a8a8a"/></svg>
<svg style="left:32px;top:369px;" width="13" height="11" viewBox="0 0 13 11"><path d="M0.5 1.5 Q0.5 0.5 1.5 0.5 H5 L6.5 2.5 H11.5 Q12.5 2.5 12.5 3.5 V9.5 Q12.5 10.5 11.5 10.5 H1.5 Q0.5 10.5 0.5 9.5Z" fill="#c4c4c4"/></svg>
<div class="t" style="left:48px;top:369.00px;font-size:12.6px;color:#d2d2d2;font-weight:400;letter-spacing:0px;">Visual Scripting</div>
<svg style="left:20px;top:386px;" width="6" height="9" viewBox="0 0 6 9"><path d="M0 0 L6 4.5 L0 9Z" fill="#8a8a8a"/></svg>
<svg style="left:32px;top:385px;" width="13" height="11" viewBox="0 0 13 11"><path d="M0.5 1.5 Q0.5 0.5 1.5 0.5 H5 L6.5 2.5 H11.5 Q12.5 2.5 12.5 3.5 V9.5 Q12.5 10.5 11.5 10.5 H1.5 Q0.5 10.5 0.5 9.5Z" fill="#c4c4c4"/></svg>
<div class="t" style="left:48px;top:385.00px;font-size:12.6px;color:#d2d2d2;font-weight:400;letter-spacing:0px;">Visual Studio</div>
</div>
<div class="a" style="left:987px;top:518px;width:136px;height:20px;background:#3e3e3e;"></div>
<div class="a" style="left:987px;top:538px;width:136px;height:1px;background:#2e2e2e;"></div>
<div class="t" style="left:991px;top:523.00px;font-size:12.5px;color:#c4c4c4;font-weight:400;letter-spacing:0px;">Assets</div>
<svg style="left:1036px;top:524px;" width="6" height="9" viewBox="0 0 6 9"><path d="M0.7 0.7 L5 4.5 L0.7 8.3" fill="none" stroke="#8a8a8a" stroke-width="1.3"/></svg>
<div class="t" style="left:1046px;top:523.00px;font-size:12.2px;color:#d2d2d2;font-weight:700;letter-spacing:0px;">SCRIPT</div>
<div class="t" style="left:1002px;top:554.00px;font-size:12.6px;color:#7d7d7d;font-weight:400;letter-spacing:0px;">This folder is empty</div>
<div class="a" style="left:987px;top:888px;width:136px;height:20px;background:#3e3e3e;"></div>
<div class="a" style="left:987px;top:887px;width:136px;height:1px;background:#2e2e2e;"></div>
<svg style="left:992px;top:893px;" width="13" height="11" viewBox="0 0 13 11"><path d="M0.5 1.5 Q0.5 0.5 1.5 0.5 H5 L6.5 2.5 H11.5 Q12.5 2.5 12.5 3.5 V9.5 Q12.5 10.5 11.5 10.5 H1.5 Q0.5 10.5 0.5 9.5Z" fill="#c4c4c4"/></svg>
<div class="a" style="left:1008px;top:888px;width:42px;height:20px;overflow:hidden">
<div class="t" style="left:0px;top:5.00px;font-size:12.6px;color:#c4c4c4;font-weight:400;letter-spacing:0px;">Assets/SCRIPT</div>
</div>
<div class="a" style="left:1060px;top:897px;width:47px;height:2px;background:#5e5e5e;"></div>
<svg style="left:1051px;top:893px;" width="11" height="11" viewBox="0 0 11 11"><circle cx="5.5" cy="5.5" r="5.2" fill="#a0a0a0"/></svg>
<div class="a" style="left:1123px;top:81px;width:2px;height:827px;background:#191919;"></div>
<div class="a" style="left:1125px;top:81px;width:316px;height:19px;background:#232323;border-radius:4px 4px 0 0"></div>
<div class="a" style="left:1125px;top:81px;width:93px;height:19px;background:#3c3c3c;border-radius:4px 4px 0 0"></div>
<svg style="left:1134px;top:86px;" width="10" height="10" viewBox="0 0 10 10"><circle cx="5" cy="5" r="5" fill="#c4c4c4"/><path d="M5 4.3 V8" stroke="#3c3c3c" stroke-width="1.6"/><circle cx="5" cy="2.4" r="0.9" fill="#3c3c3c"/></svg>
<div class="t" style="left:1149px;top:86.00px;font-size:12.6px;color:#c4c4c4;font-weight:400;letter-spacing:0px;">Inspector</div>
<svg style="left:1406px;top:85px;" width="9" height="11" viewBox="0 0 9 11"><path d="M1.8 5 V3.2 A2.7 2.7 0 0 1 7 2.4" fill="none" stroke="#c4c4c4" stroke-width="1.3"/><rect x="0.6" y="5.3" width="7.8" height="5" fill="none" stroke="#c4c4c4" stroke-width="1.3"/></svg>
<svg style="left:1426px;top:85px;" width="4" height="12" viewBox="0 0 4 12"><rect x="0.5" y="0" width="2.5" height="2.5" fill="#c4c4c4"/><rect x="0.5" y="4.3" width="2.5" height="2.5" fill="#c4c4c4"/><rect x="0.5" y="8.6" width="2.5" height="2.5" fill="#c4c4c4"/></svg>
<div class="a" style="left:1125px;top:100px;width:316px;height:54px;background:#3e3e3e;"></div>
<div class="a" style="left:1125px;top:154px;width:316px;height:1px;background:#232323;"></div>
<div class="a" style="left:1125px;top:155px;width:316px;height:682px;background:#383838;"></div>
<svg style="left:1134px;top:111px;" width="26" height="21" viewBox="0 0 26 21"><path d="M0 2 Q0 0 2 0 H9 L12 3.5 H24 Q26 3.5 26 5.5 V19 Q26 21 24 21 H2 Q0 21 0 19Z" fill="#c4c4c4"/></svg>
<div class="t" style="left:1171px;top:107.00px;font-size:13.4px;color:#c4c4c4;font-weight:400;letter-spacing:0px;">SCRIPT (Default Asset)</div>
<svg style="left:1412px;top:107px;" width="11" height="11" viewBox="0 0 11 11"><circle cx="5.5" cy="5.5" r="5.5" fill="#c4c4c4"/><path d="M3.6 4.2 Q3.6 2.3 5.5 2.3 Q7.4 2.3 7.4 4 Q7.4 5.2 5.5 5.8 V6.8" fill="none" stroke="#3e3e3e" stroke-width="1.4"/><circle cx="5.5" cy="8.6" r="0.9" fill="#3e3e3e"/></svg>
<svg style="left:1431px;top:107px;" width="4" height="12" viewBox="0 0 4 12"><rect x="0.5" y="0" width="2.5" height="2.5" fill="#c4c4c4"/><rect x="0.5" y="4.3" width="2.5" height="2.5" fill="#c4c4c4"/><rect x="0.5" y="8.6" width="2.5" height="2.5" fill="#c4c4c4"/></svg>
<div class="a" style="left:1394px;top:129px;width:43px;height:17px;background:#585858;border-radius:3px"></div>
<div class="t" style="left:1399.5px;top:132.00px;font-size:12.6px;color:#d2d2d2;font-weight:400;letter-spacing:0px;">Open</div>
<div class="a" style="left:1125px;top:837px;width:316px;height:1px;background:#232323;"></div>
<div class="a" style="left:1125px;top:838px;width:316px;height:20px;background:#3e3e3e;"></div>
<div class="t" style="left:1132.3px;top:843.00px;font-size:12.4px;color:#c4c4c4;font-weight:700;letter-spacing:0px;">Asset Labels</div>
<div class="a" style="left:1125px;top:858px;width:316px;height:1px;background:#232323;"></div>
<div class="a" style="left:1125px;top:859px;width:316px;height:49px;background:#3e3e3e;"></div>
<div class="a" style="left:1417px;top:864px;width:20px;height:15px;border-radius:8px;background:#1f4b8e"></div>
<svg style="left:1421px;top:866px;" width="11" height="11" viewBox="0 0 11 11"><path d="M5 0.5 H10.5 V6 L6 10.5 L0.5 5Z" fill="#e6e6e6"/><circle cx="8.3" cy="2.7" r="0.9" fill="#1f4b8e"/></svg>
<div class="t" style="left:1129.5px;top:890.00px;font-size:12.5px;color:#c4c4c4;font-weight:400;letter-spacing:0px;">AssetBundle</div>
<div class="a" style="left:1221px;top:887px;width:154px;height:17px;background:#515151;border-radius:3px"></div>
<div class="t" style="left:1224px;top:889.00px;font-size:12.6px;color:#d2d2d2;font-weight:400;letter-spacing:0px;">None</div>
<svg style="left:1362px;top:893px;" width="8" height="5" viewBox="0 0 8 5"><path d="M0 0 H8 L4.0 4.6Z" fill="#c4c4c4"/></svg>
<div class="a" style="left:1382px;top:887px;width:55px;height:17px;background:#515151;border-radius:3px"></div>
<div class="t" style="left:1385px;top:889.00px;font-size:12.6px;color:#d2d2d2;font-weight:400;letter-spacing:0px;">None</div>
<svg style="left:1424px;top:893px;" width="8" height="5" viewBox="0 0 8 5"><path d="M0 0 H8 L4.0 4.6Z" fill="#c4c4c4"/></svg>
<div class="a" style="left:0px;top:908px;width:1442px;height:23px;background:#191919;"></div>
<svg style="left:4px;top:912px;" width="14" height="15" viewBox="0 0 14 15"><g transform="scale(0.5)"><circle cx="13" cy="13" r="13" fill="#e0e0e0"/><path d="M18 22 L24 29 L24 18Z" fill="#e0e0e0"/><path d="M13 5 V16" stroke="#191919" stroke-width="3.2" stroke-linecap="round"/><circle cx="13" cy="21" r="2" fill="#191919"/></g></svg>
<div class="t" style="left:21.5px;top:914.00px;font-size:12.5px;color:#c4c4c4;font-weight:400;letter-spacing:0px;">EyeTribe: </div>
<svg style="left:77px;top:913px" width="93" height="12"><path transform="translate(0.00 0) scale(0.971)" d="M0.3 3 H3.6 M2 0.3 V9.8 L1 9.2 M0.3 7.2 L3.7 5.6 M7 0.2 V1.5 M4.5 1.8 H9.8 M5.6 2.6 L6.1 4 M8.6 2.6 L8 4 M4.3 4.4 H10 M4.3 7 H10 M6.6 4.8 L5.4 8 L9.2 10 M8.6 7 L5 10" fill="none" stroke="#c4c4c4" stroke-width="1.03" stroke-linecap="round" stroke-linejoin="round"/><path transform="translate(10.20 0) scale(0.971)" d="M2.6 0.3 L0.9 3.5 L3.6 3.4 M3.8 1.8 L0.5 7 L4.2 6.5 M2.2 7.2 V10 M0.6 8.3 L0.2 9.8 M3.4 8 L4 9.5 M7.2 0.3 V2.6 M4.8 1.5 H9.6 M5.2 2.8 H9.2 M4.6 4.2 H10 M4.6 4.2 V5.4 M10 4.2 V5.4 M6.3 5.5 Q6.3 9 4.6 10 M8.2 5.5 V9.3 Q8.2 9.9 9 9.9 H10" fill="none" stroke="#c4c4c4" stroke-width="1.03" stroke-linecap="round" stroke-linejoin="round"/><path transform="translate(20.40 0) scale(0.971)" d="M1 2.2 H8 M4.6 0.3 Q3.5 4 1.5 6.2 Q4.5 3.8 6 5.2 Q6.3 6.5 5.2 8 M8.8 5.2 Q3 7 3.5 9 Q4 10 9 9.8" fill="none" stroke="#c4c4c4" stroke-width="1.03" stroke-linecap="round" stroke-linejoin="round"/><path transform="translate(30.60 0) scale(0.971)" d="M1 0.6 V10 M1 0.6 H4 V4 H1 M1 2.3 H4 M6 0.6 H9.2 V9.5 L8.2 9.2 M6 0.6 V4 H9.2 M6 2.3 H9.2 M3 6 H7.5 M6 5 V9.3 L5.2 9 M6 6.2 L3.5 9" fill="none" stroke="#c4c4c4" stroke-width="1.03" stroke-linecap="round" stroke-linejoin="round"/><path transform="translate(40.80 0) scale(0.971)" d="M2.2 1.5 Q1.8 6 2.6 8 Q3.6 10 8.8 8.3 M6.5 0.8 L7 3 M8.2 0.4 L8.8 2.6" fill="none" stroke="#c4c4c4" stroke-width="1.03" stroke-linecap="round" stroke-linejoin="round"/><path transform="translate(51.00 0) scale(0.971)" d="M1.5 2.2 H8.6 M1.8 4.8 H8.4 M5 0.3 V8.6 Q4 7 2.5 7.6 Q1.6 8.6 2.8 9.6 Q5.5 10.2 9.2 8.4" fill="none" stroke="#c4c4c4" stroke-width="1.03" stroke-linecap="round" stroke-linejoin="round"/><path transform="translate(61.20 0) scale(0.971)" d="M3 0.5 V7.6 Q3.2 10 5.2 9.8 Q7.6 9.4 9 7.2" fill="none" stroke="#c4c4c4" stroke-width="1.03" stroke-linecap="round" stroke-linejoin="round"/><path transform="translate(71.40 0) scale(0.971)" d="M0.6 3 H5.2 M3.2 0.3 Q2.6 5 0.9 9.8 M5.8 5 H9.4 M5.6 7.4 Q5.4 9.6 7.2 9.7 H9.8" fill="none" stroke="#c4c4c4" stroke-width="1.03" stroke-linecap="round" stroke-linejoin="round"/><path transform="translate(81.60 0) scale(0.971)" d="M2.2 7 A1.6 1.6 0 1 1 2.19 7" fill="none" stroke="#c4c4c4" stroke-width="1.03" stroke-linecap="round" stroke-linejoin="round"/></svg>
<div class="a" style="left:1336px;top:910px;width:1px;height:18px;background:#2c2c2c;"></div>
<div class="a" style="left:1362px;top:910px;width:1px;height:18px;background:#2c2c2c;"></div>
<div class="a" style="left:1388px;top:910px;width:1px;height:18px;background:#2c2c2c;"></div>
<div class="a" style="left:1414px;top:910px;width:1px;height:18px;background:#2c2c2c;"></div>
<svg style="left:1341px;top:911px;" width="16" height="16" viewBox="0 0 16 16"><ellipse cx="8" cy="9" rx="4.5" ry="5.5" fill="#c4c4c4"/><path d="M2 5 L5 7 M14 5 L11 7 M1 9 H4 M15 9 H12 M2 14 L5 12 M14 14 L11 12 M6 2 L7 4 M10 2 L9 4" stroke="#c4c4c4" stroke-width="1.2"/><path d="M1 1 L15 15" stroke="#191919" stroke-width="2.5"/><path d="M1 1 L15 15" stroke="#c4c4c4" stroke-width="1.2"/></svg>
<svg style="left:1368px;top:911px;" width="16" height="16" viewBox="0 0 16 16"><ellipse cx="8" cy="3.5" rx="6" ry="2.5" fill="#c4c4c4"/><path d="M2 5 V7.5 Q8 10.5 14 7.5 V5 Q8 8 2 5Z M2 9 V11.5 Q8 14.5 14 11.5 V9 Q8 12 2 9Z" fill="#c4c4c4"/><path d="M1 1 L15 15" stroke="#191919" stroke-width="2.5"/><path d="M1 1 L15 15" stroke="#c4c4c4" stroke-width="1.2"/></svg>
<svg style="left:1394px;top:911px;" width="16" height="16" viewBox="0 0 16 16"><circle cx="8" cy="8" r="5.5" fill="none" stroke="#c4c4c4" stroke-width="1.4"/><circle cx="8" cy="8" r="2.2" fill="#c4c4c4"/><path d="M8 0.5 V3 M8 13 V15.5 M0.5 8 H3 M13 8 H15.5" stroke="#c4c4c4" stroke-width="1.4"/><path d="M1 1 L15 15" stroke="#191919" stroke-width="2.5"/><path d="M1 1 L15 15" stroke="#c4c4c4" stroke-width="1.2"/></svg>
<svg style="left:1420px;top:912px;" width="15" height="15" viewBox="0 0 15 15"><circle cx="7.5" cy="7.5" r="6.6" fill="none" stroke="#c4c4c4" stroke-width="1.3"/><path d="M4 7.8 L6.5 10.2 L11 5.2" fill="none" stroke="#c4c4c4" stroke-width="1.4"/></svg>
</div></body></html>
